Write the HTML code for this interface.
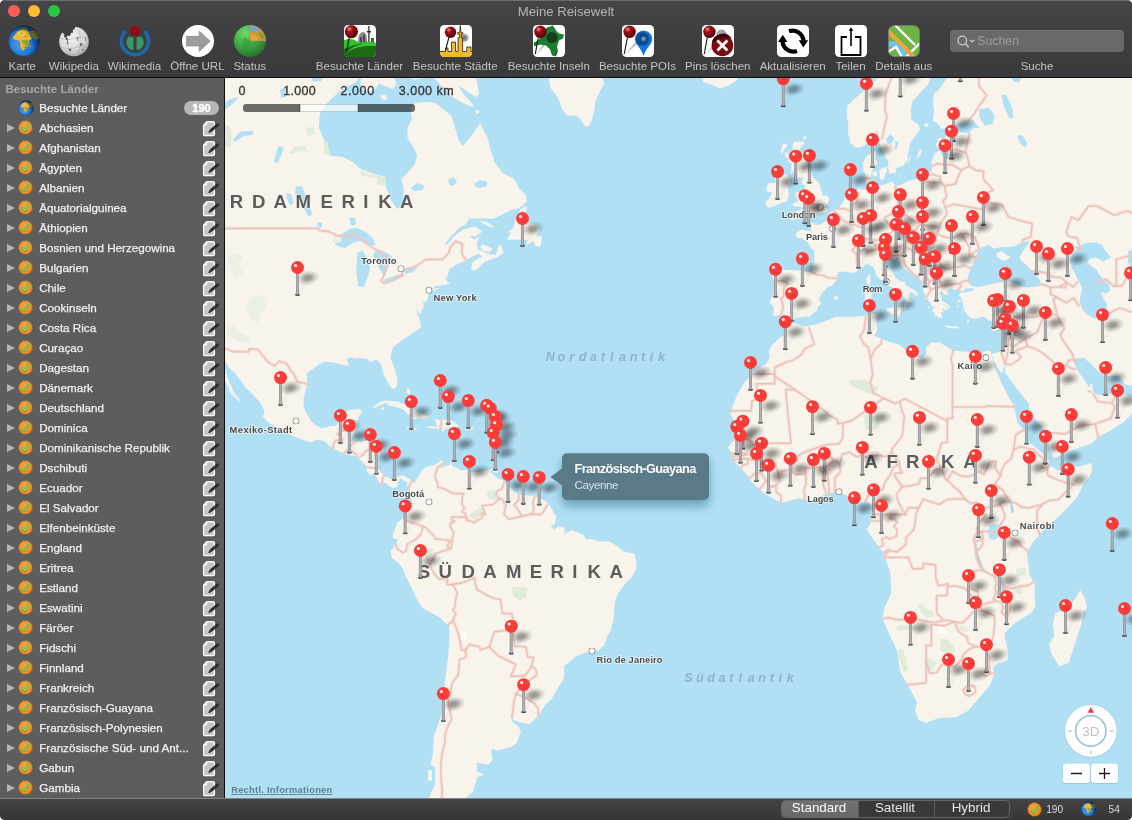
<!DOCTYPE html>
<html lang="de"><head><meta charset="utf-8"><title>Meine Reisewelt</title>
<style>
*{box-sizing:border-box;margin:0;padding:0}
html,body{width:1132px;height:820px;overflow:hidden;background:#fff}
body{font-family:"Liberation Sans","DejaVu Sans",sans-serif;-webkit-font-smoothing:antialiased;position:relative}
#title,.tl,#search span,#sb .hd,.r b,.pill,#seg span,.sn{will-change:opacity;opacity:.999}
#win{position:absolute;left:0;top:0;width:1132px;height:820px;overflow:hidden;background:#3a3a3c;border-radius:5px}
#tb{position:absolute;left:0;top:0;width:1132px;height:78px;background:linear-gradient(#454547,#3f3f41 40%,#3a3a3c);border-top:1px solid #6c6c6f;border-bottom:1px solid #0c0c0c}
#tb .lights i{position:absolute;top:4px;width:12px;height:12px;border-radius:50%}
#title{position:absolute;left:0;width:1132px;top:1.5px;height:18px;line-height:18px;text-align:center;color:#b6b6b6;font-size:13.15px}
.ti{position:absolute;top:24px;width:32px;height:32px}
.ti svg{display:block;width:32px;height:32px}
.tl{position:absolute;top:57.5px;height:14px;line-height:14px;font-size:11.55px;color:#c4c4c4;white-space:nowrap;transform:translateX(-50%)}
#search{position:absolute;left:950px;top:29px;width:174px;height:22px;border-radius:4px;background:#69696b;border-top:1px solid #747477}
#search span{position:absolute;left:27.3px;top:2px;font-size:12.3px;line-height:16px;color:#9c9c9e}
#sb{position:absolute;left:0;top:78px;width:224px;height:720px;background:#5d5d5d}
#div{position:absolute;left:224px;top:78px;width:1px;height:720px;background:#0a0a0a}
#sb .hd{position:absolute;left:5.5px;top:4px;height:14px;line-height:14px;font-size:11.5px;font-weight:bold;color:#a8a8a8}
.r{position:absolute;left:0;width:224px;height:20px}
.r b{position:absolute;left:39.2px;top:2px;height:16px;line-height:16px;font-size:11.65px;font-weight:normal;color:#f2f2f2;white-space:nowrap;-webkit-text-stroke:.25px #f2f2f2}
.r .tri{position:absolute;left:7px;top:6px;width:0;height:0;border-left:8px solid #b4b4b4;border-top:4px solid transparent;border-bottom:4px solid transparent}
.r svg.ic{position:absolute;left:18.4px;top:2.3px;width:15px;height:15px}
.r svg.ed{position:absolute;left:201px;top:1px;width:20px;height:18px}
.pill{position:absolute;left:184px;top:3px;width:35px;height:14px;border-radius:7px;background:#b8b8b8;color:#fff;font-size:11px;font-weight:bold;line-height:15px;text-align:center;-webkit-text-stroke:.35px #fff}
#map{position:absolute;left:225px;top:78px;width:907px;height:720px;overflow:hidden;background:#b1e0f5}
#map svg{position:absolute;left:0;top:0;display:block}
#st{position:absolute;left:0;top:798px;width:1132px;height:22px;background:linear-gradient(#444446,#363638);border-top:1px solid #858385}
#seg{position:absolute;left:781px;top:1px;width:229px;height:17.5px;border-radius:4.5px;border:1px solid #666668;background:#39393b;overflow:hidden}
#seg i{position:absolute;top:0;height:17px;display:block}
#seg span{position:absolute;top:-2px;height:17px;line-height:17px;font-size:13.4px;color:#e6e6e6;text-align:center;margin-left:-1px}
.sn{position:absolute;top:3.5px;font-size:10.1px;line-height:14px;color:#dcdcdc}
#map svg{will-change:transform}.ct{letter-spacing:0}</style></head>
<body><div id="win">
<div id="tb"><div class="lights"><i style="left:8px;background:#fd5f57"></i><i style="left:28px;background:#febc2e"></i><i style="left:48px;background:#28c840"></i></div><div id="title">Meine Reisewelt</div><div class="ti" style="left:8px"><svg viewBox="0 0 32 32" width="32" height="32"><defs><radialGradient id="gk" cx="36%" cy="62%" r="78%"><stop offset="0" stop-color="#45a2ea"/><stop offset=".5" stop-color="#1f73d0"/><stop offset=".85" stop-color="#113f95"/><stop offset="1" stop-color="#0a2258"/></radialGradient><radialGradient id="nk" cx="25%" cy="75%" r="95%"><stop offset=".55" stop-color="#000" stop-opacity="0"/><stop offset="1" stop-color="#000" stop-opacity=".6"/></radialGradient><clipPath id="ck"><circle cx="16" cy="16" r="15.600"/></clipPath></defs><circle cx="16" cy="16" r="15.600" fill="url(#gk)"/><g clip-path="url(#ck)"><path d="M11.500 3.200l5.500-1.400 4 1.200-1.500 1.800-4.500.4z" fill="#4d7a2c"/><path d="M21.500 6.500l4.500-1.500 4 3.500 1.500 5-4 1-3-2.500-1.500-2.500z" fill="#7d8f33"/><path d="M7.500 9l2.500-3 4-1.500 4 .5 2.500 1.500 1 2 1 3 1.500 2.500-2.500 1-1.500 3-1 3-1.500 2-2 2.500-1.500-.5-1.500-3-.5-4-1-2.500-2.500-.5-2.500-.5-1.500-2z" fill="#eeb63a"/><path d="M13 15.500l3-1 4 .5 1.500 2.500-1 3-1.500 2-2 0-1.500-3z" fill="#8cad3a"/><path d="M9 7.500l4-2 4 .3 2.500 1.500-1 2.500-4 1-4-.8z" fill="#f5cd4c"/><path d="M14.500 20l3-.5 1 2-1.500 2.500-1.500-.5z" fill="#eaa231"/><path d="M21.800 19.500l.9.300-.3 3-.9.500z" fill="#d99a32"/><g fill="#e0281e"><circle cx="13.400" cy="8.500" r=".7"/><circle cx="17.600" cy="11.200" r=".7"/><circle cx="11.300" cy="19.200" r=".7"/><circle cx="17.400" cy="22.400" r=".6"/><circle cx="3.300" cy="11.500" r=".6"/><circle cx="23.800" cy="7" r=".6"/><circle cx="26.400" cy="10.500" r=".6"/><circle cx="18.400" cy="17.200" r=".6"/></g><circle cx="16" cy="16" r="15.600" fill="url(#nk)"/></g><circle cx="16" cy="16" r="15.400" fill="none" stroke="#1a1a2a" stroke-opacity=".55" stroke-width=".7"/></svg></div><div class="tl" style="left:22.25px">Karte</div><div class="ti" style="left:58px"><svg viewBox="0 0 32 32"><defs><radialGradient id="gW" cx="42%" cy="38%" r="72%"><stop offset="0" stop-color="#f4f4f4"/><stop offset=".55" stop-color="#d9d9d9"/><stop offset=".9" stop-color="#a2a2a2"/><stop offset="1" stop-color="#7c7c7c"/></radialGradient><clipPath id="cW"><path d="M4.200 7.600L6.500 9.500 6 12.200 8.600 12.600 9.600 10.400 12 11 13 8 15.200 7.600 14.600 5 16.600 4 17.500 1.800A14.800 14.800 0 1 1 4.200 7.600z"/></clipPath></defs><g clip-path="url(#cW)"><rect width="32" height="32" fill="url(#gW)"/><g stroke="#9a9a9a" stroke-width=".5" fill="none" opacity=".8"><path d="M2 13c5 2 9 2 14 .500s9-1.500 14-.500M3 22c5 2 8.500 2 13 1s8-2 12.500-1M10 6c-1.500 8-.500 17 3 26M21 5c2 8 1.500 18-1.500 26"/></g><g fill="#5e5e5e"><path d="M8.200 14.500h2.400v.6h-.8v3h.8v.6h-2.400v-.6h.8v-3h-.8z"/><path d="M18.600 12.200l2.400.4-.1.600-.9-.1-.4 2.800-.7-.1.400-2.800-.8-.1z"/><path d="M22 18.400l2.200-.4.2 3-.7.1-.1-1.200-.9.200.1 1.200-.7.100z"/><path d="M11 23.400l2.200.5-.2 2-2.100-.5z"/><path d="M23.800 24.600l1.400-.6.500 1.200-1.400.6z"/><path d="M27.500 13l.6 2.600-.6.200-.6-2.600z"/><circle cx="8.600" cy="13.600" r=".9" fill="#222"/></g></g></svg></div><div class="tl" style="left:73.9px">Wikipedia</div><div class="ti" style="left:119px"><svg viewBox="0 0 32 32"><circle cx="16" cy="5.6" r="5.2" fill="#8e0d13"/><path d="M6.6 6.2A13.6 13.6 0 1 0 25.4 6.200" fill="none" stroke="#1c6ba6" stroke-width="3.6"/><path d="M14.4 12.2v13.1a8.2 8.2 0 0 1-4.6-13.900zM17.6 12.2v13.1a8.2 8.2 0 0 0 4.6-13.900z" fill="#389a62"/></svg></div><div class="tl" style="left:134.5px">Wikimedia</div><div class="ti" style="left:182px"><svg viewBox="0 0 32 32"><circle cx="16" cy="16" r="16" fill="#fff"/><path d="M4.500 11.300h12.700v-5.300l11 10.200-11 10.200v-5.400h-12.700z" fill="#9d9d9d" stroke="#7d7d7d" stroke-width=".6"/></svg></div><div class="tl" style="left:197.4px">Öffne URL</div><div class="ti" style="left:234px"><svg viewBox="0 0 32 32"><defs><radialGradient id="gS" cx="35%" cy="25%" r="85%"><stop offset="0" stop-color="#6fdc6a"/><stop offset=".5" stop-color="#3ea645"/><stop offset="1" stop-color="#1f6a26"/></radialGradient><clipPath id="cS"><circle cx="16" cy="16" r="16"/></clipPath></defs><circle cx="16" cy="16" r="16" fill="url(#gS)"/><g clip-path="url(#cS)"><path d="M16 0h16v16h-16z" fill="#c7983a"/><path d="M16 1l6 1 4 4-5 1-5-2z" fill="#6da7d2"/><path d="M24 7l6 3 2 5-5-2z" fill="#7e9b3f"/><path d="M17 9l5 1 2 5-7 1z" fill="#e0a832"/><path d="M10 12l8 5-7 8-3-6z" fill="#2f9a3a" opacity=".6"/></g></svg></div><div class="tl" style="left:249.75px">Status</div><div class="ti" style="left:344px"><svg viewBox="0 0 32 32"><defs><clipPath id="cL"><rect width="32" height="32" rx="4.5"/></clipPath></defs><g clip-path="url(#cL)"><rect width="32" height="32" fill="#fff"/><path d="M14 16c0-5 2-9 5-9s4 4 4 9v3h-9z" fill="#8c8c8c"/><path d="M16 12h2v8h-2zM19 10h2v10h-2z" fill="#4b4b4b"/><path d="M24.300 1h1.200v5h1.400v1.600h-1.400v10h-1.200v-10h-1.300v-1.600h1.300z" fill="#222"/><path d="M27 13h3v6h-3z" fill="#555"/><path d="M0 15c6-2 11-1 15 3 6-2 12-2 17 0v14h-32z" fill="#2fc22c"/><path d="M0 24c9-5 20-6 32-4v3c-12-1-22 1-32 7z" fill="#1d6b12"/><path d="M0 27c10-5 21-6 32-5v10h-32z" fill="#1d6b12"/><path d="M2 28c8-6 18-8 30-7v-2c-13-1-23 2-30 9z" fill="#39d634"/></g><path d="M5.800 9.500l-3.300 17" stroke="#111" stroke-width="1.100"/><defs><radialGradient id="pa" cx="35%" cy="30%" r="75%"><stop offset="0" stop-color="#ef8a8a"/><stop offset=".3" stop-color="#a0101a"/><stop offset="1" stop-color="#4e0006"/></radialGradient></defs><circle cx="7.4" cy="6.6" r="6.6" fill="url(#pa)"/></svg></div><div class="tl" style="left:359.5px">Besuchte Länder</div><div class="ti" style="left:440px"><svg viewBox="0 0 32 32"><defs><clipPath id="cT"><rect width="32" height="32" rx="4.500"/></clipPath><radialGradient id="gT"><stop offset="0" stop-color="#555" stop-opacity=".9"/><stop offset=".6" stop-color="#777" stop-opacity=".7"/><stop offset="1" stop-color="#999" stop-opacity="0"/></radialGradient></defs><g clip-path="url(#cT)"><rect width="32" height="32" fill="#fff"/><circle cx="24.300" cy="12.800" r="5.200" fill="url(#gT)"/><path d="M-1 33V26.500H5.500V23H8V26.500H11.500V17H15.500V26.500H18V13H19.300V9H17.800V7.600H19.600L20.300 .5 21 7.600H22.800V9H21.300V13H22.600V26.500H26.800V22H31V26.500H33V33z" fill="#f2b92e" stroke="#2e2206" stroke-width=".8" stroke-linejoin="round"/><path d="M-1 33V28.200H33V33z" fill="#f2b92e"/></g><path d="M9 12.200l-3.600 13.500" stroke="#111" stroke-width="1.100"/><defs><radialGradient id="pb" cx="35%" cy="30%" r="75%"><stop offset="0" stop-color="#ef8a8a"/><stop offset=".3" stop-color="#a0101a"/><stop offset="1" stop-color="#4e0006"/></radialGradient></defs><circle cx="10.5" cy="7.2" r="5.7" fill="url(#pb)"/></svg></div><div class="tl" style="left:455.2px">Besuchte Städte</div><div class="ti" style="left:533px"><svg viewBox="0 0 32 32"><rect width="32" height="32" rx="4.500" fill="#fff"/><path d="M2.500 30l8-11 1.500 1.500z" fill="#bbb"/><path d="M14 2.500l6-2 3 5 3 3 5 1-1 4-4 2-2 6 1 5-2 5-4-1-2-6-4-4-6-1-6 2-0-4 5-3 3-6z" fill="#1f7d33"/><circle cx="19" cy="12.500" r="5.600" fill="#14401f"/><path d="M5.600 10.500l-3.300 18.500" stroke="#111" stroke-width="1.100"/><defs><radialGradient id="pc" cx="35%" cy="30%" r="75%"><stop offset="0" stop-color="#ef8a8a"/><stop offset=".3" stop-color="#a0101a"/><stop offset="1" stop-color="#4e0006"/></radialGradient></defs><circle cx="7.4" cy="6.8" r="6.2" fill="url(#pc)"/></svg></div><div class="tl" style="left:548.75px">Besuchte Inseln</div><div class="ti" style="left:622px"><svg viewBox="0 0 32 32"><rect width="32" height="32" rx="4.500" fill="#fff"/><path d="M2.500 30l11-13 2 2z" fill="#c4c4c4"/><path d="M21.600 5.500a8.600 8.600 0 0 1 8.600 8.600c0 5.600-6.400 9-8.600 17-2.200-8-8.600-11.400-8.600-17a8.600 8.600 0 0 1 8.600-8.600z" fill="#1273de"/><circle cx="20.500" cy="14" r="6.800" fill="#0b4c94"/><circle cx="21.600" cy="13.800" r="2.200" fill="#8a8f96"/><path d="M5.800 10.500l-3.500 18.500" stroke="#111" stroke-width="1.100"/><defs><radialGradient id="pd" cx="35%" cy="30%" r="75%"><stop offset="0" stop-color="#ef8a8a"/><stop offset=".3" stop-color="#a0101a"/><stop offset="1" stop-color="#4e0006"/></radialGradient></defs><circle cx="7.6" cy="6.8" r="6.2" fill="url(#pd)"/></svg></div><div class="tl" style="left:637.45px">Besuchte POIs</div><div class="ti" style="left:702px"><svg viewBox="0 0 32 32"><rect width="32" height="32" rx="4.500" fill="#fff"/><path d="M2.500 30l11-13 2 2z" fill="#c4c4c4"/><circle cx="19.500" cy="9.500" r="5" fill="#666" opacity=".6"/><circle cx="20.400" cy="20.400" r="10.800" fill="#7a0b10"/><path d="M9.800 18a10.800 10.800 0 0 1 20-4c-6-3-14-1-20 4z" fill="#3e0306"/><path d="M15.400 15.400l10 10M25.400 15.400l-10 10" stroke="#fff" stroke-width="2.800"/><path d="M5.600 10.500l-3.300 18.500" stroke="#111" stroke-width="1.100"/><defs><radialGradient id="pe" cx="35%" cy="30%" r="75%"><stop offset="0" stop-color="#ef8a8a"/><stop offset=".3" stop-color="#a0101a"/><stop offset="1" stop-color="#4e0006"/></radialGradient></defs><circle cx="7.4" cy="6.8" r="6.2" fill="url(#pe)"/></svg></div><div class="tl" style="left:717.75px">Pins löschen</div><div class="ti" style="left:777px"><svg viewBox="0 0 32 32"><rect width="32" height="32" rx="4.500" fill="#fff"/><path d="M12 6.200a11 11 0 0 1 14.500 9.500" fill="none" stroke="#000" stroke-width="4.200"/><path d="M21.800 15.200h9.400l-4.900 7.200z" fill="#000"/><path d="M20 26a11 11 0 0 1-14.500-9.500" fill="none" stroke="#000" stroke-width="4.200"/><path d="M1 17h9.400l-4.600-7.200z" fill="#000"/></svg></div><div class="tl" style="left:792.7px">Aktualisieren</div><div class="ti" style="left:835px"><svg viewBox="0 0 32 32"><rect width="32" height="32" rx="4.500" fill="#fff"/><path d="M12 12h-5.500v18h19v-18h-5.500" fill="none" stroke="#000" stroke-width="1.800"/><path d="M16 21v-16" stroke="#000" stroke-width="1.600"/><path d="M13.600 5.800l2.400-3.600 2.400 3.600z" fill="#000"/></svg></div><div class="tl" style="left:850.5px">Teilen</div><div class="ti" style="left:888px"><svg viewBox="0 0 32 32"><defs><clipPath id="cD"><rect x=".5" y=".5" width="31" height="31" rx="6"/></clipPath></defs><g clip-path="url(#cD)"><rect width="32" height="32" fill="#6cb544"/><path d="M0 17c5-2 9-1 12 2l6 5 4 8h-22z" fill="#6cc4ea"/><path d="M0 23c4-2 7-1 10 2l4 7h-14z" fill="#6cb544"/><path d="M5 -2l22 22M18 32l16-16M-2 28l10-6 6 10" stroke="#fff" stroke-width="2.400" fill="none"/><path d="M-3 3l32 32" stroke="#e8a93a" stroke-width="4.200"/></g><rect x=".5" y=".5" width="31" height="31" rx="6" fill="none" stroke="#777" stroke-width=".8"/></svg></div><div class="tl" style="left:903.8px">Details aus</div><div id="search"><svg viewBox="0 0 24 22" width="24" height="22" style="position:absolute;left:3px;top:-1px"><circle cx="9.300" cy="10.500" r="4.300" fill="none" stroke="#d0d0d0" stroke-width="1.200"/><path d="M12.400 13.700l3.400 3.600" stroke="#d0d0d0" stroke-width="1.300"/><path d="M17 9.800l2 2 2-2" fill="none" stroke="#d0d0d0" stroke-width="1.200"/></svg><span>Suchen</span></div><div class="tl" style="left:1037px">Suche</div></div>
<div id="sb"><svg width="0" height="0" style="position:absolute"><symbol id="bdg" viewBox="0 0 16 16"><defs><radialGradient id="bg1" cx="45%" cy="35%" r="70%"><stop offset="0" stop-color="#fba33c"/><stop offset="1" stop-color="#ee8518"/></radialGradient></defs><path d="M8.00 0.30L9.16 1.40L10.63 0.76L11.35 2.20L12.95 2.10L13.13 3.69L14.67 4.15L14.30 5.71L15.58 6.66L14.70 8.00L15.58 9.34L14.30 10.29L14.67 11.85L13.13 12.31L12.95 13.90L11.35 13.80L10.63 15.24L9.16 14.60L8.00 15.70L6.84 14.60L5.37 15.24L4.65 13.80L3.05 13.90L2.87 12.31L1.33 11.85L1.70 10.29L0.42 9.34L1.30 8.00L0.42 6.66L1.70 5.71L1.33 4.15L2.87 3.69L3.05 2.10L4.65 2.20L5.37 0.76L6.84 1.40z" fill="url(#bg1)" stroke="#c96a10" stroke-width=".35"/><path d="M4.700 8.400l2.300 2.900 4.500-7.300" fill="none" stroke="#3f9a35" stroke-width="2.300" stroke-linejoin="round"/><path d="M4.700 8.300l2.300 2.800 4.500-7.200" fill="none" stroke="#7be06a" stroke-width="1.500" stroke-linejoin="round"/></symbol><symbol id="edt" viewBox="0 0 20 18"><path d="M5.700 2.700h6.300q1.400 0 1.400 1.400v11.200q0 1.400-1.400 1.400h-8q-1.400 0-1.400-1.400v-9.200z" fill="#c6c6c6" stroke="#fff" stroke-width="1.300" stroke-linejoin="round"/><path d="M2.700 6.200h3.400v-3.400z" fill="#fff"/><path d="M16.600 4.400l1.500 1.900-7.400 6-2.900 1.300 1.400-2.900z" fill="#303030" stroke="#303030" stroke-width="1" stroke-linejoin="round"/></symbol></svg><div class="hd">Besuchte Länder</div><div class="r" style="top:20px"><div style="position:absolute;left:18px;top:2px;width:16px;height:16px"><svg viewBox="0 0 32 32" width="16" height="16"><defs><radialGradient id="gs" cx="36%" cy="62%" r="78%"><stop offset="0" stop-color="#45a2ea"/><stop offset=".5" stop-color="#1f73d0"/><stop offset=".85" stop-color="#113f95"/><stop offset="1" stop-color="#0a2258"/></radialGradient><radialGradient id="ns" cx="25%" cy="75%" r="95%"><stop offset=".55" stop-color="#000" stop-opacity="0"/><stop offset="1" stop-color="#000" stop-opacity=".6"/></radialGradient><clipPath id="cs"><circle cx="16" cy="16" r="15.600"/></clipPath></defs><circle cx="16" cy="16" r="15.600" fill="url(#gs)"/><g clip-path="url(#cs)"><path d="M11.500 3.200l5.500-1.400 4 1.200-1.500 1.800-4.500.4z" fill="#4d7a2c"/><path d="M21.500 6.500l4.500-1.500 4 3.500 1.500 5-4 1-3-2.500-1.500-2.500z" fill="#7d8f33"/><path d="M7.500 9l2.500-3 4-1.500 4 .5 2.500 1.500 1 2 1 3 1.500 2.500-2.500 1-1.500 3-1 3-1.500 2-2 2.500-1.500-.5-1.500-3-.5-4-1-2.500-2.500-.5-2.500-.5-1.500-2z" fill="#eeb63a"/><path d="M13 15.500l3-1 4 .5 1.500 2.500-1 3-1.500 2-2 0-1.500-3z" fill="#8cad3a"/><path d="M9 7.500l4-2 4 .3 2.500 1.500-1 2.500-4 1-4-.8z" fill="#f5cd4c"/><path d="M14.500 20l3-.5 1 2-1.500 2.500-1.500-.5z" fill="#eaa231"/><path d="M21.800 19.500l.9.300-.3 3-.9.500z" fill="#d99a32"/><g fill="#e0281e"><circle cx="13.400" cy="8.500" r=".7"/><circle cx="17.600" cy="11.200" r=".7"/><circle cx="11.300" cy="19.200" r=".7"/><circle cx="17.400" cy="22.400" r=".6"/><circle cx="3.300" cy="11.500" r=".6"/><circle cx="23.800" cy="7" r=".6"/><circle cx="26.400" cy="10.500" r=".6"/><circle cx="18.400" cy="17.200" r=".6"/></g><circle cx="16" cy="16" r="15.600" fill="url(#ns)"/></g><circle cx="16" cy="16" r="15.400" fill="none" stroke="#1a1a2a" stroke-opacity=".55" stroke-width=".7"/></svg></div><b>Besuchte Länder</b><div class="pill">190</div></div><div class="r" style="top:40px"><i class="tri"></i><svg class="ic"><use href="#bdg"/></svg><b>Abchasien</b><svg class="ed"><use href="#edt"/></svg></div><div class="r" style="top:60px"><i class="tri"></i><svg class="ic"><use href="#bdg"/></svg><b>Afghanistan</b><svg class="ed"><use href="#edt"/></svg></div><div class="r" style="top:80px"><i class="tri"></i><svg class="ic"><use href="#bdg"/></svg><b>Ägypten</b><svg class="ed"><use href="#edt"/></svg></div><div class="r" style="top:100px"><i class="tri"></i><svg class="ic"><use href="#bdg"/></svg><b>Albanien</b><svg class="ed"><use href="#edt"/></svg></div><div class="r" style="top:120px"><i class="tri"></i><svg class="ic"><use href="#bdg"/></svg><b>Äquatorialguinea</b><svg class="ed"><use href="#edt"/></svg></div><div class="r" style="top:140px"><i class="tri"></i><svg class="ic"><use href="#bdg"/></svg><b>Äthiopien</b><svg class="ed"><use href="#edt"/></svg></div><div class="r" style="top:160px"><i class="tri"></i><svg class="ic"><use href="#bdg"/></svg><b>Bosnien und Herzegowina</b><svg class="ed"><use href="#edt"/></svg></div><div class="r" style="top:180px"><i class="tri"></i><svg class="ic"><use href="#bdg"/></svg><b>Bulgarien</b><svg class="ed"><use href="#edt"/></svg></div><div class="r" style="top:200px"><i class="tri"></i><svg class="ic"><use href="#bdg"/></svg><b>Chile</b><svg class="ed"><use href="#edt"/></svg></div><div class="r" style="top:220px"><i class="tri"></i><svg class="ic"><use href="#bdg"/></svg><b>Cookinseln</b><svg class="ed"><use href="#edt"/></svg></div><div class="r" style="top:240px"><i class="tri"></i><svg class="ic"><use href="#bdg"/></svg><b>Costa Rica</b><svg class="ed"><use href="#edt"/></svg></div><div class="r" style="top:260px"><i class="tri"></i><svg class="ic"><use href="#bdg"/></svg><b>Curaçao</b><svg class="ed"><use href="#edt"/></svg></div><div class="r" style="top:280px"><i class="tri"></i><svg class="ic"><use href="#bdg"/></svg><b>Dagestan</b><svg class="ed"><use href="#edt"/></svg></div><div class="r" style="top:300px"><i class="tri"></i><svg class="ic"><use href="#bdg"/></svg><b>Dänemark</b><svg class="ed"><use href="#edt"/></svg></div><div class="r" style="top:320px"><i class="tri"></i><svg class="ic"><use href="#bdg"/></svg><b>Deutschland</b><svg class="ed"><use href="#edt"/></svg></div><div class="r" style="top:340px"><i class="tri"></i><svg class="ic"><use href="#bdg"/></svg><b>Dominica</b><svg class="ed"><use href="#edt"/></svg></div><div class="r" style="top:360px"><i class="tri"></i><svg class="ic"><use href="#bdg"/></svg><b>Dominikanische Republik</b><svg class="ed"><use href="#edt"/></svg></div><div class="r" style="top:380px"><i class="tri"></i><svg class="ic"><use href="#bdg"/></svg><b>Dschibuti</b><svg class="ed"><use href="#edt"/></svg></div><div class="r" style="top:400px"><i class="tri"></i><svg class="ic"><use href="#bdg"/></svg><b>Ecuador</b><svg class="ed"><use href="#edt"/></svg></div><div class="r" style="top:420px"><i class="tri"></i><svg class="ic"><use href="#bdg"/></svg><b>El Salvador</b><svg class="ed"><use href="#edt"/></svg></div><div class="r" style="top:440px"><i class="tri"></i><svg class="ic"><use href="#bdg"/></svg><b>Elfenbeinküste</b><svg class="ed"><use href="#edt"/></svg></div><div class="r" style="top:460px"><i class="tri"></i><svg class="ic"><use href="#bdg"/></svg><b>England</b><svg class="ed"><use href="#edt"/></svg></div><div class="r" style="top:480px"><i class="tri"></i><svg class="ic"><use href="#bdg"/></svg><b>Eritrea</b><svg class="ed"><use href="#edt"/></svg></div><div class="r" style="top:500px"><i class="tri"></i><svg class="ic"><use href="#bdg"/></svg><b>Estland</b><svg class="ed"><use href="#edt"/></svg></div><div class="r" style="top:520px"><i class="tri"></i><svg class="ic"><use href="#bdg"/></svg><b>Eswatini</b><svg class="ed"><use href="#edt"/></svg></div><div class="r" style="top:540px"><i class="tri"></i><svg class="ic"><use href="#bdg"/></svg><b>Färöer</b><svg class="ed"><use href="#edt"/></svg></div><div class="r" style="top:560px"><i class="tri"></i><svg class="ic"><use href="#bdg"/></svg><b>Fidschi</b><svg class="ed"><use href="#edt"/></svg></div><div class="r" style="top:580px"><i class="tri"></i><svg class="ic"><use href="#bdg"/></svg><b>Finnland</b><svg class="ed"><use href="#edt"/></svg></div><div class="r" style="top:600px"><i class="tri"></i><svg class="ic"><use href="#bdg"/></svg><b>Frankreich</b><svg class="ed"><use href="#edt"/></svg></div><div class="r" style="top:620px"><i class="tri"></i><svg class="ic"><use href="#bdg"/></svg><b>Französisch-Guayana</b><svg class="ed"><use href="#edt"/></svg></div><div class="r" style="top:640px"><i class="tri"></i><svg class="ic"><use href="#bdg"/></svg><b>Französisch-Polynesien</b><svg class="ed"><use href="#edt"/></svg></div><div class="r" style="top:660px"><i class="tri"></i><svg class="ic"><use href="#bdg"/></svg><b>Französische Süd- und Ant...</b><svg class="ed"><use href="#edt"/></svg></div><div class="r" style="top:680px"><i class="tri"></i><svg class="ic"><use href="#bdg"/></svg><b>Gabun</b><svg class="ed"><use href="#edt"/></svg></div><div class="r" style="top:700px"><i class="tri"></i><svg class="ic"><use href="#bdg"/></svg><b>Gambia</b><svg class="ed"><use href="#edt"/></svg></div></div><div id="div"></div>
<div id="map"><svg viewBox="225 78 907 720" width="907" height="720">
<defs><radialGradient id="sh"><stop offset="0" stop-color="#000" stop-opacity=".4"/><stop offset=".3" stop-color="#000" stop-opacity=".34"/><stop offset=".62" stop-color="#000" stop-opacity=".15"/><stop offset="1" stop-color="#000" stop-opacity="0"/></radialGradient><linearGradient id="stk" x1="0" x2="1" y1="0" y2="0"><stop offset="0" stop-color="#8d8d92"/><stop offset=".5" stop-color="#b4b4b8"/><stop offset="1" stop-color="#8d8d92"/></linearGradient><g id="pin"><ellipse cx="10.3" cy="10.300" rx="11.800" ry="7.500" fill="url(#sh)" transform="rotate(-10 10.3 10.300)"/><path d="M2 25l6.500-11.500" stroke="#000" stroke-opacity=".025" stroke-width="4" stroke-linecap="round"/><ellipse cx="0" cy="27.200" rx="2.500" ry="1.200" fill="#4c4c4e"/><rect x="-1.500" y="5" width="3" height="22" fill="url(#stk)"/><circle r="6.500" fill="#fb3d39"/><circle cx="-2" cy="-2.100" r="1.500" fill="#fff"/></g></defs>
<rect x="225" y="78" width="907" height="720" fill="#b1e0f5"/>
<g fill="#f8f4ec">
<polygon points="222.5,75.5 361.2,75.5 355.5,82.2 341,90.2 333.8,96.5 327,103 321.5,110 319.5,115.5 318.8,128 323.8,139.2 327.5,151.8 331.2,156 342.5,156.8 352.5,161.8 361.2,169.2 375,174.2 385,176.8 386.2,188 391.2,200.5 397.5,209.2 403,203 403.8,188 401.2,179.2 407.5,173 415,164.2 417,154.2 412.5,145.5 407.5,138 407.5,128 412,119.2 410.5,108 415,103 427.5,101.8 435,103 445,110.5 451.2,115.5 455,128 458.8,140.5 462.5,146 468.8,139.2 475,130.5 478.8,125.5 480.1,123.2 487.5,137.9 489.6,146 494.4,162.2 502.3,172.6 507.6,175.8 513.9,178.6 519.2,188.5 525.6,194.7 526.9,201.1 522.4,206 518.7,208.3 510.2,210.2 493.8,218.7 484.3,218.2 469.5,218.6 465.3,225.1 460.3,226.7 452.1,235.1 444.2,245.3 447.9,244.1 452.9,237.5 458.4,232.8 463.7,229.6 474.3,226.3 481.4,230.4 481.2,232.4 475.4,236.3 469.5,235.9 473.5,239.5 479.6,236.7 476.9,243.4 478,249.5 479.6,249.9 483.3,251.1 489.1,254.3 496,254.9 498.1,247.2 501.2,243.9 502.3,250.7 503.6,252.6 498.1,256.9 484.5,262 479.6,266.8 473.8,271.2 471.1,268 472.7,262.3 478,258.6 482.2,256.7 478.5,253.7 471.4,257.3 466.4,260.1 456.9,264.6 449.2,269.3 447.3,276.6 445.2,278.7 447.1,281.6 447.6,282.8 450.5,282.6 449.5,280.9 450.8,283.6 447.3,284.4 443.7,285.1 435.2,286.4 431,289 436.8,288.6 440.7,287.8 434.7,290.4 429.4,291.1 429.4,292.1 427.3,299.7 424.6,302.4 421.5,298.7 423.6,303.4 423.7,306.5 419,314.8 416.7,305.5 417.2,315.5 419,316.5 421.3,326.9 415.9,331.1 408.5,335.9 398.2,342.9 392.9,347.6 390.3,357.8 394.8,369.3 397.5,379.7 397,385.2 395.6,388.5 391.9,388.8 388.2,383.3 387.1,381.2 383.1,373.2 381.6,365.1 376.5,359.5 369.4,361.9 367.6,359.3 359.6,357.8 355.4,358.4 350.7,357.5 347,358.7 348.8,366 342.2,364.8 334.3,362.6 324.5,361.7 319.5,364.2 306.8,373.2 307.1,384.1 304.2,395.5 303.4,405.6 306.3,412.9 312.4,422.8 321.6,428.6 330.8,426.1 335.3,425.9 341.9,419.1 342.7,413.5 346.7,411 354.6,409.3 360.4,409.3 362,411.8 358.3,417.2 356.5,427.8 354.4,432.3 351.2,440 352.2,442 355.7,441.4 361.7,441.7 366,441 371.3,440.5 376.5,442.7 381,446 379.8,451.3 377.9,462.3 378.1,468.1 381.7,473.1 385.8,476.6 392.4,479.5 398.2,476.5 399.5,475.5 403.5,475.5 411.4,480.2 413.5,483.8 408.8,488.1 407.5,486.5 407.2,482.2 400.3,478.6 397.7,482.2 397.7,486.7 392.9,488.1 388.7,485.4 386.1,482.7 382.4,483.6 378.7,481.4 375.8,476.3 372.3,473.4 370.7,475.4 366.8,471.2 366.7,466.4 359.6,459.6 357,455.8 352.8,455.8 345.9,453.9 340.6,451.9 332.7,448.5 324.2,441.1 317.4,439.6 310.5,442.5 292.5,435.9 283.8,431.5 280.4,429.8 269.3,423.6 261.9,416.1 264.3,414.6 264,409.5 258.2,400.1 250.3,392 244.2,386.2 240.2,379.7 234.4,372.5 227.5,366 223.3,356.8 218,350.7 207.5,341.3"/>
<polygon points="360.7,57.4 360.7,87.2 368.6,92.5 373.9,90.7 379.2,83.6 384.5,86 392.4,89 396.6,84.8 394.5,77.5 394.5,57.4"/>
<polygon points="380.8,94.8 385.5,94.8 387.6,98.9 383.9,100 380.8,97.7"/>
<polygon points="405.6,57.4 408.2,75.1 413.5,79.4 418.8,78.8 426.7,76.3 429.4,57.4"/>
<polygon points="432,57.4 434.7,78.8 442.6,87.2 451,96 463.7,103.4 471.7,106.8 474.3,106.2 470.1,101.2 463.7,94.2 458.4,85.4 466.4,90.7 475.4,97.1 479.1,94.2 478,87.2 475.4,75.1 475.4,57.4"/>
<polygon points="475.9,110.2 479.1,110.2 479.1,113.5 475.9,113.5"/>
<polygon points="548,75.5 550.5,88 558,98 561.8,108 566.8,115.5 575.5,115.5 580.5,119.2 584.2,125.5 588,126.8 591.8,120.5 594.2,110.5 595.5,100.5 599.2,93 604.2,83 601.8,75.5"/>
<polygon points="704.2,75.5 702.5,81.8 710.5,84.2 720.5,88.5 729.2,85.5 736.8,80 739.2,75.5"/>
<polygon points="527.1,206.8 524.5,214.4 527.1,220.2 529.8,224.3 531.1,223.1 537.7,226.3 539.8,230.8 535.6,237.1 541.4,235.5 541.9,239.7 540,246.9 535.1,245.7 534,241 525.6,245.3 527.7,240.3 516.6,239.5 507.9,239.7 507.1,239.3 510.8,232.4 507.1,232.4 512.9,228.4 514.2,223.9 517.4,214.4 520.8,209.4 525,206.6"/>
<polygon points="479.6,221 487.5,222.3 494.4,227.5 490.1,227.1 482.2,223.1"/>
<polygon points="480.1,246.9 482.8,244.5 492.8,248.4 490.1,251.8 483.3,250.7"/>
<polygon points="781.5,173.2 787.6,174.9 790.3,180 791.6,182.2 788.2,185.9 788.2,191.7 788.7,195.2 786.7,202 783.4,202.1 777.1,205.1 768.6,208.1 766,205.1 765.2,202.6 769.1,198.7 770.7,194.7 772.6,192.5 766.5,191.2 767,185.9 768.6,183.1 775,183.1 776.5,180 774.4,180.4 776.8,175.4"/>
<polygon points="790.3,219.6 792.9,220.5 798.5,217.3 801.1,218.4 802.4,215.3 807.5,215.9 813.5,215.3 819.6,213.4 825.5,212.6 827.5,210.8 828.1,208.7 824.1,207.7 825.7,205.1 827.5,203.8 829.6,199.3 827.3,195.4 822,195.6 822.2,193 820.9,189.4 819.9,185 817.2,181.3 813,176.8 809.8,169.6 807.2,167.4 803.5,167.7 806.7,164.8 805.1,163.1 809.3,156.4 811,153 809.8,151 798.2,153 799.3,149.5 804,143.5 804.4,141.6 794,141.8 792.4,146 793.2,149 789.8,152 790.3,155.1 789.6,157.9 787.6,160.6 791.5,163.5 790.8,174 794.5,170.2 795.6,167.9 794.5,174.9 794.8,180.1 793.5,178.1 801.4,177.7 804.5,177.2 801.4,181.3 803.5,185 805.3,185 804.3,187.6 804.3,190.8 803,191.7 796.1,192.1 795.3,196.5 798.8,200 792.4,204.3 793.5,206.4 799.5,206.8 803.8,208.1 806.1,207.3 804.5,209.1 798.2,210.2 796.5,211.7 794.2,215.7"/>
<polygon points="787.1,152 788.7,156.9 786.1,157.9 784.5,153"/>
<polygon points="783.4,143 787.6,145 783.9,150 781.8,154.9 780.8,151"/>
<polygon points="803,136.9 806.1,135.8 805.6,139.4 803,138.9"/>
<polygon points="881.2,57.4 878.5,76.3 873.2,83.6 870.6,87.2 865.3,89.6 861.1,93.1 853.2,100 847.3,105.7 846.8,116.8 848.4,123.2 847.9,133.8 850,138.4 850,143 855.3,147 857.7,148 862.7,146.5 866.9,143.5 871.7,137.9 875.9,134.8 876.9,128.5 878,135.8 879.6,138.9 880.1,145 883.3,151 886.4,158.8 888.6,161.2 887.5,167 889.1,171.2 888.6,173.2 895.4,173.1 896.2,171.7 895.4,168.4 902.8,166 907.1,161.2 908.6,150.5 910.8,142 916,134.8 920.3,129.6 918.2,124.3 911.3,120 910.8,109 912.3,101.2 915.5,98.3 920.8,91.9 927.7,84.8 931.4,76.3 931.4,57.4"/>
<polygon points="879.1,170.2 883.3,167.4 887,167 887,171.2 884.9,174.9 883.8,179.5 880.1,179.5 879.6,174.9"/>
<polygon points="872.2,172.1 876.4,171.2 877.5,174 876.9,176.3 873.2,176.3"/>
<polygon points="916.6,157.9 918.2,153 920.8,148.5 921.9,151 919.7,155.9 917.1,158.8"/>
<polygon points="907.1,165.5 908.6,158.8 910.8,154.4 909.7,159.8"/>
<polygon points="898.1,175.8 900.5,174.9 900.2,176.8"/>
<polygon points="935.6,143 939.3,141.5 943,142.5 941.9,145 937.7,148 936.1,146"/>
<polygon points="937.2,138.9 940.3,137.4 941.9,139.4 938.8,141"/>
<polygon points="924,124.3 927.7,123.2 927.7,127 925,127"/>
<polygon points="948.8,57.4 948.8,76.3 942.5,84.2 938.2,90.7 934,93.1 932.9,102.3 934,111.3 933.5,115.7 932.9,121.1 937.2,123.2 941.9,129.1 952.2,125.9 962.8,122.7 972.1,120 977.9,125.9 980,128 973.6,128 968.4,133.3 960.4,132.2 951.2,133.3 947.2,134.3 944.6,137.9 945.1,142 949.9,144.5 949.1,149 947.7,157.9 943,157.4 939.8,150.5 934.3,153.9 931.4,162.7 931.9,170.2 926.1,177.2 924,181.8 918.9,182.2 917.6,178.6 907.6,181.3 902.6,184.1 895.7,186.6 892.3,181.3 884.3,184.5 878,186.3 874,182.2 870.3,178.6 871.7,172.1 874.3,166 878,163.1 874.8,157.9 876.1,153.5 876.4,150.5 873,152 865.8,156.9 863.2,162.7 863.2,171.7 865,172.6 866.1,177.7 865.8,183.1 867.4,186.8 865.3,189.9 858.4,188.5 856.9,190.8 846.8,192.1 845.5,195.2 842.9,202.6 838.9,208.1 835.7,209.8 830.2,212.3 828.9,214.4 828.3,218.6 826.2,220.8 820.9,224.3 815.1,225.1 813.8,222.7 811.7,223.1 810.4,222.7 811.9,231.2 809.8,231.2 801.9,229.6 795.3,233.2 797.2,237.9 802.4,238.3 807.2,241.8 809.8,246.5 814.3,250.7 814.6,254.9 814.1,262 812.2,270.4 809.8,271.9 804.5,271.2 800.3,270.6 790.5,270.1 783.4,269.7 778.1,268.6 776,271.4 771.4,274.8 773.9,279.8 774.7,287.2 773.4,293.8 770.7,299.3 770.2,303.6 773.4,305.5 773.9,309.2 772.8,315.4 778.7,315.5 783.7,314.2 787.1,318.8 790.8,322.1 792.1,321.1 797.2,317.5 807.5,316.6 808.8,317.3 815.1,311.5 816.7,311.5 817.8,306.5 821.5,303.8 818.6,299 823,291.8 824.9,290.4 827,287.6 832,285.5 837.8,279.1 836.5,276.2 838.9,271.9 845.8,271.5 848.7,271.9 851.8,273.3 855.5,272.6 858.7,269 862.7,267.7 865.3,264.6 867.4,263.8 872.2,266 874.8,270.1 875.9,274.8 879.1,278.4 882.8,280.5 885.1,283 887,285.1 892,286.9 895.7,289.5 898.3,290.7 901.2,295.2 902.8,294.9 905.1,299.7 905.5,302.1 904.2,304.1 903.1,308.2 905.2,309.3 908.1,303.4 911,301.4 908.1,295.2 911.3,292.1 915.5,294.9 917.4,296.6 918.2,294.2 915.2,290.7 909.5,287.4 904.4,284.1 906,281.9 900.7,281.6 895.4,278 891.7,269.7 886.8,266.3 885.4,263.5 886.4,259.7 885.7,256.1 889.6,254.5 893.2,254.5 892,255.6 893.6,260.3 896.8,256.9 899.1,259.4 900.9,265.9 904.4,268.8 907.3,270.4 912.3,273.7 916,276.6 919.5,278.4 921.3,280.5 923.2,286 923.3,292.1 926.1,296.1 927.4,298.7 930,302.4 931.9,306.6 935.2,307.1 931.9,309.8 932.9,311.2 934.8,313.8 935.1,316.7 937.2,315.4 939.2,319.4 939.7,317.1 943,319.1 942.2,317.5 940.9,311.7 944,312.8 941.7,309.3 945.3,309.2 947.4,311.2 947.2,307.8 943.5,304.8 941.7,299.7 941.4,295.9 939.8,293.2 941.7,290.9 943.5,293.5 944,295.6 945.9,293.8 947.2,295.6 948.8,294.2 949.3,294.2 946.7,292.5 949.3,288.8 957.3,289.3 962,291.1 958.8,294.9 961.5,292.8 965.7,288.6 968.4,288.3 973.4,288.3 974.2,290 967.3,292.1 961.5,292.8 958.6,295.6 960.3,296.4 962.9,302.6 963.8,309.6 967.4,314.9 972.7,318.8 978.3,318.1 982.6,316.4 985.1,317.6 988.6,320.2 993.7,322 998.3,320.2 1003.3,316.9 1008,317.1 1011.8,318.1 1011.6,322 1009.6,325.4 1008,335.5 1004.3,346.4 1004.3,346.3 1002.7,350.1 997.4,352.7 992.1,353.6 993,360.3 996,365.1 999.2,370.4 1001.8,373.4 1003.1,370.4 1004.1,364.2 1005,367.7 1004.9,372.2 1008.4,376.9 1013.3,383.7 1018.6,390.7 1024,397.8 1028.4,403.1 1029.6,410.2 1032.8,416.4 1038.1,422.6 1042.5,428.8 1046.6,434.9 1048.7,443.8 1050.5,450.9 1052.6,456.5 1055.8,457.6 1066.4,452.3 1078.8,447.7 1091.2,443.8 1098.2,437.1 1108.8,431.4 1123,422.6 1132,413.7 1137.1,401.3 1129,396.7 1120,391.8 1118.2,387.6 1117.9,381.4 1115.9,387.2 1115.9,390.7 1108.8,394.3 1101.8,395.2 1094.7,394.3 1092.9,391.6 1092.6,384.5 1090.3,384 1089.7,388.1 1085.8,381.9 1080.5,374.8 1076.1,367.7 1073.5,361.6 1074.4,359.3 1077,358 1084.1,358 1089.4,362.4 1094.7,367.7 1100,373.1 1107.1,376.2 1114.1,376.2 1117.9,375.5 1122.1,380.1 1125.8,385.1 1138.9,385.8 1140,60"/>
<polygon points="789.8,323.4 792.4,322.7 805.1,326.6 817.2,324 836.5,316.8 847.3,317.1 861.6,316.2 872.6,313.7 878.5,315 876.4,319.4 876.4,323.4 877.5,330.5 873.8,335.6 879.1,338.1 890.1,341.9 900.2,345.1 908.1,352.5 921.9,358.1 926.1,354.4 926.4,346.9 931.4,342.6 939.8,342.6 947.2,346.9 953.6,350.7 964.1,351.6 978.4,352.5 988.4,350.7 991.1,352.1 992.4,360.2 995.3,369.9 999,376.5 1001.6,383.3 1004.8,389.3 1008,396.1 1013.8,405.8 1017,420.6 1017.8,423.4 1023.8,429.5 1028.9,442.7 1036.5,447.7 1046,456.9 1049.2,459.6 1048.4,464.5 1050.3,465.8 1058.2,470.7 1068.7,467.2 1080.4,466.2 1091.5,463.1 1092,470.9 1088.8,478.4 1083.5,483.8 1076.7,497.9 1060,515.4 1045.2,528 1036.5,538.2 1032.3,543.1 1030,547.6 1027,553 1028.1,562.2 1029.1,573.7 1032.8,580.8 1034.9,583.1 1034.4,595.5 1035.5,603.6 1035.5,606.4 1031.2,613 1015.4,622.4 1004.5,633.3 1005.3,639.7 1006.9,645.4 1008,656.1 1006.9,660.4 997.9,663.3 992.7,668.3 994.2,674.5 990,685.2 984.4,691.7 967.8,711.1 955.7,717.2 939.3,718.1 926.1,722.8 918,719.7 917.6,716.8 915,711.1 917.1,702.3 909.5,687.9 907.3,684.2 900.5,672.4 897,650.8 891.2,638 882.5,618.8 884.6,607.5 891.2,593.2 890.3,573.1 885.7,558.7 883,551.5 878.5,546.8 876.7,544.3 866.6,529.6 870.3,524.1 872,516.4 872.7,510.7 871.7,504.8 867.4,502.4 864.3,502.1 852.6,503.5 846.8,495.5 838.4,492 833.2,492.6 826.8,493.7 819.3,496.8 809.3,501.1 799.3,498.2 780.8,502.9 763.3,492.8 750.7,481.1 748,475.8 735.9,462.9 732.7,454.5 727.9,447.7 733.2,440.5 735.9,428.9 734.3,421.7 730.3,413.2 736.1,397.2 743.8,383.3 749.6,377 752.2,372.3 766.5,363.5 769.7,357.5 768.8,350.7 771.5,345.7 780.2,337.5 784.2,335 787.9,327.3"/>
<polygon points="1080.6,589.8 1080.9,591.7 1084.6,597.4 1087.2,608 1083.5,611.3 1083,615.2 1081.4,623.8 1075.9,640.9 1073,650 1068.7,662.9 1059,666.2 1051,653.1 1049.5,644 1054.3,635.8 1052.9,623.2 1055.3,613 1065,610.2 1070.3,605.8 1075.6,597.7 1078.5,592.8"/>
<polygon points="411.7,480.2 414.1,483.8 417.2,479 421.5,470.9 425.2,467.7 428.3,466.4 435.2,464.8 441.7,459.9 443.7,463.4 440.5,467.2 442.1,468 445.2,466.1 449.5,465 450.5,461.2 452.1,465.6 461.1,470.4 466.9,469.9 472.2,472 478.5,472.3 481.2,470.7 493.3,469.3 490.1,472 498.1,478.4 503.4,481.1 513.1,490.2 519.2,495 528.7,495.2 535.6,496 544,500.1 548.3,502.9 556.2,516.7 554.6,524.6 550.7,526 554.1,529.4 558.8,526.2 564.7,527.8 564.1,533.9 572.1,529.9 583.7,535.2 586.3,539.4 591.1,538.9 599.5,541.5 609,541.3 617,545.9 623.8,551.6 634.4,553.7 636.5,563.8 636,568.9 631.8,577.4 624.6,584.1 617,595.3 614.3,605.3 614,614.3 613,621.3 610.6,631.3 607.5,635.8 603.8,645.4 598.5,650.6 592.1,650.6 584.2,652.9 575.8,656.6 566.8,663.9 564.1,665.6 564.1,678 557.8,688.2 552,698.6 545.1,705.1 538.2,715.5 530,723.7 523.4,723.2 514.7,720.4 511.8,717.4 511.8,721.3 514.5,723.2 518.7,726.4 520.8,732.3 516.3,743.6 510.2,747.3 498.1,750.3 491.2,749 492.3,760.6 488.6,764.8 476.9,762.7 476.9,771.2 484.3,774.7 476.9,776.9 476.4,780.5 473.2,791.5 463.7,799.6 463.7,812.1 420.9,812.1 420.9,806.7 429.4,796.8 434.7,785.6 435.2,774.7 434.9,767.4 430.4,764.1 432.6,755.8 434.1,735.6 437.8,725.8 442.1,711.4 443.7,691.9 445.8,675.1 448.4,654.9 449.7,635.2 448.9,625.7 443.4,621 440,617.4 423,608.6 417.2,599.8 412.7,590.3 405.1,574.5 403,569.1 397.9,562.2 391.9,558 390.7,551 395.3,544.7 398.2,539.9 392.4,537.8 394,531.2 395,528.2 397.7,522 399.5,521 404,516.7 413,505.6 410.6,497.1 411.4,493.4 408.8,488.1"/>
<polygon points="428.3,769.8 432,770.5 432,780.5 427.8,780.5"/>
<polygon points="371.5,407.7 380.8,401.6 385,400.4 389.8,400.7 397.7,401.6 405.6,404.7 412.5,408.7 418.3,411.8 428.6,416.9 423,418.9 419.9,418.5 409.7,419.1 413,416.3 408.2,414.4 403.5,409.5 395.3,406.7 389.8,405.8 385.5,403 379.2,405.8 375,407.8"/>
<polygon points="381.3,407.6 383.9,407.6 383.9,410.1 381.3,409.8"/>
<polygon points="406.4,427.5 408.8,426.7 414.1,427.3 417.8,429.2 414.6,430 409.8,430.3"/>
<polygon points="427,427.5 428.9,425.9 435.7,427 438.1,426.4 435.7,423.9 436.3,421.4 432.6,419.4 438.9,419.7 446.8,419.4 451,420.3 454.2,422.2 456.3,423.9 459.2,426.1 456.1,427.3 451,427 447.3,428.4 444.7,428.4 443.1,431.7 441,429.2 437.3,428.4 430.7,428.4"/>
<polygon points="465.3,427.3 473.5,427.3 472.7,429.5 465.3,429.8"/>
<polygon points="493.3,469.3 498.6,468.8 498.1,472.6 493.3,472.8"/>
<polygon points="406.7,388.5 409.8,389.1 410.4,394.3 407.2,393.8"/>
<polygon points="218,350.7 223.3,359.9 226.5,374.4 230.2,383.8 234.4,393.8 239.7,399.5 239.4,401.8 237,399.5 230.2,392.6 227,383.8 218,374.4 212.7,362.9"/>
<polygon points="941.7,303.1 944,302.1 948.3,304.8 950.4,307.8 950.1,309.2 947.2,306.5 944.6,305.1"/>
<polygon points="957,300.7 959.9,299.7 961,301.7 958.3,302.4"/>
<polygon points="957.3,305.1 958.6,305.1 958.3,307.5 957.3,307.1"/>
<polygon points="966.8,321.1 969.4,319.1 968.9,322.1 967.3,322.7"/>
<polygon points="928.2,306.5 930,306.8 929.8,308.5 928.2,307.8"/>
<polygon points="924.2,296.9 925.8,296.9 926.6,299.3 925.3,299"/>
<polygon points="863.7,288.3 869,286.5 871.9,291.8 871.1,300.7 868,302.1 864.8,301.4 865,295.2"/>
<polygon points="870.1,274.1 870.9,280.5 869.3,285.5 866.9,283.7 866.1,278.4 868.5,275.9"/>
<polygon points="886.2,308.8 890.7,307.5 902.6,307.1 900.2,313.5 900.2,317.5 896,315.5 887,311.5"/>
<polygon points="945.1,325.3 948.8,326.1 956.7,326.6 959.4,327.3 958.3,328.2 951.4,328.6 945.1,326.7"/>
<polygon points="991.1,328.2 994.5,326.3 1003,324.3 999.8,328.6 994.8,331.1 991.9,330.2"/>
<polygon points="833.1,298 836.8,295.6 838.6,298 836.3,300"/>
</g>
<g fill="#b1e0f5">
<polygon points="223.8,103 232.5,98 238.8,97.5 235,101.8 228.8,106.8 223.8,110.5"/>
<polygon points="280,89.2 287.5,88 286.2,96.8 281.2,98"/>
<polygon points="311.2,76.8 322.5,76.8 321.2,81.8 312.5,81"/>
<polygon points="232.5,140.5 240,131.8 252.5,130.5 253.8,134.2 242.5,136.8 235,141.8"/>
<polygon points="278.8,145.5 283.8,148 281.2,155.5 277.5,163 273.8,161.8 276.2,153"/>
<polygon points="296.2,186 302.5,186.8 305,195.5 310,208 312.5,214.2 308.8,216.8 305,210.5 300,200.5 295,193"/>
<polygon points="286.2,193 291.2,194.2 293.8,203 290,205.5 287.5,200.5"/>
<polygon points="349.2,218 355,217.5 356.2,224.2 351.2,226"/>
<polygon points="317.5,221.8 322.5,223 321.2,228 317.5,226.8"/>
<polygon points="332.5,240.5 342.5,233.5 350,228.5 357.5,228 365,231.8 372.5,238 375.5,245 367.5,245.5 360,241 352.5,243 345,248 337.5,246"/>
<polygon points="357.5,253 362.5,250.5 367.5,258 370,268 367.5,278 363.8,286.8 358,286.8 356.2,270.5"/>
<polygon points="375,250.5 381.2,250.5 387.5,253 392,256.8 390,261.8 387.5,270.5 383.8,275.5 379.5,269.2 377.5,261.8 373,256"/>
<polygon points="383,280 395,276 402.5,272.5 404,276 395,281 387.5,283.5"/>
<polygon points="403.8,270.5 412.5,267 417.5,268 413,272 405.5,274"/>
<polygon points="448.2,179.2 453.8,177.5 457,181.8 453,186 448.8,184.2"/>
<polygon points="410.5,188 417.5,183 425,186 422.5,190 413.8,191"/>
<polygon points="473.8,184.2 480,180 487.5,181.8 486.2,186.8 477.5,188"/>
<polygon points="885.9,138.9 890.1,134.3 894.4,137.9 892.3,143 888.6,144 886.4,142"/>
<polygon points="895.4,141 898.6,142 896.5,150 894.9,150"/>
<polygon points="967.4,277.8 970,270.7 973.6,261.9 977.1,253.1 981.5,247.7 988.6,245.1 993,248.6 997.4,247.7 1002.7,246.9 1008,246.9 1015.1,246 1020.4,243.3 1028.4,241 1029.3,243.3 1024,249.5 1019.5,256.9 1021.3,260.5 1025.7,264.5 1031,269.8 1034.6,273.4 1038.1,277.8 1040.8,282.2 1039.9,285.8 1034.6,286.6 1027.5,287.5 1020.4,286.6 1015.1,284 1009.8,281.3 1002.7,282.2 995.7,283.1 988.6,284.9 981.5,286.6 976.2,287 971.8,285.8 968.3,283.1"/>
<polygon points="1071.7,254.8 1077,248.6 1082.3,244.2 1089.4,242.4 1096.5,242.4 1101.8,245.1 1105.3,250.4 1108.8,254.8 1111.5,257.5 1107.1,259.2 1102.6,261.9 1100,259.2 1094.7,257.5 1089.4,259.2 1087.6,262.8 1091.2,266.3 1096.5,269.8 1099.1,274.3 1102.6,278.7 1108.8,284.5 1110.6,290.2 1106.2,293.4 1100.9,292 1103.5,299 1107.1,304.3 1106.2,311.4 1101.8,316.7 1094.7,318.5 1087.6,314.9 1082.3,309.6 1079.7,302.6 1080.5,295.5 1082.3,288.4 1078.8,281.3 1075.2,274.3 1071.7,267.2 1069.9,260.1"/>
<polygon points="1128.3,251.3 1132,249.5 1133.6,258.4 1132,267.2 1128.6,263.7 1127.4,256.6"/>
<polygon points="979,109.2 988.5,107.5 994.8,115.5 992.2,124.2 984.8,125.5 979.8,118"/>
<polygon points="1001.5,94.2 1006.5,95.5 1012.2,108 1013.5,118 1009,118 1003.5,105.5"/>
<polygon points="1017.2,136 1022.2,135 1027.2,143.5 1024.8,147.5 1019.8,143"/>
<polygon points="1011,76.8 1021,76.8 1019.8,82.5 1013.5,81.8"/>
<polygon points="987.9,531 989.5,525.1 996.4,524.1 1001.1,526.2 1000.6,531.5 997.4,538.4 993.7,539.9 989,538.4"/>
</g>
<g fill="#f8f4ec">
<polygon points="996.5,253.1 1001.8,251.3 1006.3,254.8 1010.7,256.6 1008,259.2 1002.7,261 999.2,258.4 996.5,256.6"/>
</g>
<g fill="#e1ebd9">
<polygon points="225,125.5 230,126.8 232,138 230,146.8 225,146.8"/>
<polygon points="289.5,153 293.8,146.8 305,146 308,151.8 300,150.5 292.5,154.2"/>
<polygon points="305.5,128 313.8,126.8 315,134.2 307.5,136"/>
<polygon points="324.5,140.5 327.5,141.8 330,155.5 323.8,154.2"/>
<polygon points="360,170 368.8,174.2 377.5,175.5 385,178 385,185.5 377.5,184.2 377,178 367.5,176.8 361.2,175.5"/>
<polygon points="486.2,491.8 496.2,490.5 497.5,499.2 488.8,500.5"/>
<polygon points="468.8,515.5 482.5,505.5 485,511.8 475,520.5"/>
<polygon points="423.8,550.5 432.5,548 433.8,555.5 425,557.5"/>
<polygon points="511.8,586.8 528,587.5 525.5,598 519.2,600.5 513,595.5"/>
<polygon points="848.5,380.5 866,379.2 878.5,388 873.5,395.5 861,390.5 851,385.5"/>
<polygon points="863.5,415.5 878.5,414.2 879.8,428 866,430.5"/>
<polygon points="918,604.6 921.7,603.4 925.4,608.3 932.7,610.7 935.1,616.2 926.6,617.4 921.7,613.2"/>
<polygon points="896.7,626 905.9,624.8 916.2,626 916.8,630.2 902.2,630.2 896.7,630.9"/>
<polygon points="958.3,625.4 964.4,626.6 969.3,629 966.8,632.7 960.7,630.2"/>
<polygon points="940.6,638.8 947.3,639.4 952.2,644.9 955.9,650.4 951,653.4 943.7,653.4 940,649.8"/>
<polygon points="927.2,657.7 932.7,660.1 937,663.2 933.9,668 930.9,671.1 927.2,664.4"/>
<polygon points="898.5,648.5 902.8,649.8 904.6,655.9 907.7,658.3 905.9,663.2 908.3,670.5 903.4,671.7 901,663.2 897.9,655.9"/>
<polygon points="1016,568.5 1026,568 1025.5,575.5 1017.2,576"/>
<polygon points="1014.8,587.5 1023.5,586.8 1022.2,594.2 1015.5,593.5"/>
</g>
<g fill="#ebf0e3"><polygon points="230.3,254.3 240.9,253.4 242.7,259.6 237.4,263.1 244.5,275.5 235.6,279 230.3,272 232.1,264.9 226.8,263.1"/><polygon points="248,300.2 258.6,294.9 265.7,302 263.9,310.9 256.8,314.4 258.6,323.2 251.5,319.7 246.2,310.9"/><polygon points="333.2,235.7 340.8,234.8 341.7,241.9 334.6,243.3"/><polygon points="247.5,303 262.5,294.2 266.2,305.5 260,313 257.5,323 252.5,315.5 246.2,310.5"/><polygon points="225,324.2 235,325.5 240,333 250,336.8 248.8,343 237.5,340.5 227.5,335.5"/></g>
<g fill="#fdfdfb"><polygon points="937.6,627.2 942.4,626.6 946.1,631.5 943.7,633.9 938.8,632.7"/><polygon points="460,632.5 465.5,631.8 467,638 461.2,639.2"/></g>
<g fill="#a9cfe3"><polygon points="974.2,544.2 976.8,544.2 977.9,552.7 980.5,560.6 984.7,571.8 982.1,572.3 977.3,562.2 974.7,552.7"/><polygon points="999.5,576.6 1002.2,577.2 1004.8,587.4 1005.3,598.2 1006.4,603.1 1003.2,602.6 1002.2,592.8 1000.6,584.7"/><polygon points="1010.1,502.4 1012.2,503.5 1013.8,512.5 1011.7,513"/><polygon points="981,520.4 983.7,520.4 986.8,514.6 985.3,513.5"/><polygon points="973.6,535.2 975.7,535.2 975.2,539.4 973.1,538.9"/></g>
<g fill="none" stroke-linejoin="round" stroke-linecap="round"><g stroke="#f1d3cb" stroke-opacity=".55" stroke-width="3.200"><polyline points="411.7,480.2 408.8,488.1"/><polyline points="443.5,463.1 437.8,467.2 434.7,476.8 437.3,482.2 437.8,487 445.2,489.1 453.7,493.9 463.7,493.4 462.1,498.2 462.1,505 464.8,508.2 462.1,511.4 465.3,514 466.9,519.9"/><polyline points="466.9,519.9 465.8,517.2 460,517 451.6,517.2 451.6,520.5 454.7,520.9 453.4,522.5 450.3,523.3 450.3,527.3 453.7,532 450.8,548.4"/><polyline points="450.8,548.4 446.8,546.3 450.3,540.5 435.2,538.9 433.6,535.7 425.2,527.3 423,526.7"/><polyline points="423,526.7 417.2,524.1 410.9,522.8 403.8,518.5"/><polyline points="423,526.7 420.9,534.1 415.1,539.9 407.2,544.2 406.1,550.5 403,552.7 397.2,548.9 395.8,544.2"/><polyline points="450.8,548.4 435.2,553.7 433.6,558 431,562.7 429.4,565.9 434.7,574 438.9,579.3 447.3,578.2 447.3,584.7 452.6,584.4"/><polyline points="452.6,584.4 457.4,592.8 455.8,598.7 454.7,608 452.6,609.7 455.8,613 453.2,620.1 448.4,624.9"/><polyline points="453.2,620.1 456.3,628.5 458.4,634.1 460,641.4 461.6,650 465.3,650"/><polyline points="452.6,584.4 461.1,583.1 474.8,577.7 475.4,584.1 476.9,589.5 487.5,595.5 493.8,598.2 500.7,599.8 502.3,613.5 511.8,613.5 512.9,619 516.6,622.9 515,628.5 513.1,634.9"/><polyline points="513.1,634.9 508.1,630.2 494.4,631.8 489.4,646.8"/><polyline points="489.4,646.8 480.6,650 479.6,646.6 475.9,646 470.1,644.3 465.3,650"/><polyline points="465.3,650 466.4,656.9 459.5,659.8 458.4,674.5 452.1,683.4 450.5,692.5 447.9,701.7 450.5,713 451.6,719.4 448.4,725.1 445.2,733.6 444.7,743.6 442.1,753.7 441,764.1 441,778.3 442.1,789.3 442.1,796.8 440,808.3"/><polyline points="489.4,646.8 498.1,655.7 509.7,661.5 516,664.5 510.8,676.2 524.5,676.2 531.9,666.2"/><polyline points="513.1,634.9 514.7,646 526.1,647.1 527.7,656.9 533.5,657.5 531.9,666.2"/><polyline points="531.9,666.2 536.1,669.7 536.6,675.4 525.6,682.8 516,693.7"/><polyline points="516,693.7 524.5,697.4 526.6,698 535.1,704.2 538.2,708.6 538.2,715.5"/><polyline points="516,693.7 513.9,701.7 512.9,711.1 511.8,717.4"/><polyline points="466.9,519.9 474.3,522.5 482.2,517.7 481.7,513 485.4,514.6 482.2,505.6 488.6,505 492.8,504.5 499.7,498.7"/><polyline points="499.7,498.7 496,495 497.5,490.7 501.8,489.1 504.4,482.2"/><polyline points="499.7,498.7 503.4,499.7 503.9,502.9 506,505.6 503.9,514 508.6,519.3 513.9,518.3 521.9,516.2"/><polyline points="521.9,516.2 517.6,508.8 513.9,505 518.7,499.7 518.4,494.7"/><polyline points="521.9,516.2 525,515.6 531.9,514"/><polyline points="531.9,514 534,509.3 532.7,502.4 535.1,496"/><polyline points="531.9,514 540.3,514.6 542.5,513 547.5,504.8"/><polyline points="307.1,384.1 296.8,381.5 294.6,375 290.4,370.2 286.7,363.5 278.8,361.1 275.1,366 268.2,362.3 257.7,349.1 248.7,349.1 248.7,351.7 233.5,351.7 213.8,344.4"/><polyline points="333.2,448.5 333.2,444.4 335.9,440.2 342.5,440.2 337.4,433.6 339.6,433.6 339.6,430.5 349.3,430.5 351.7,428.4 353.8,426.7"/><polyline points="349.3,430.5 349.1,441.1 350.7,441.1"/><polyline points="354.1,442.2 349.1,446.8 348.3,449.2 344.3,452.8"/><polyline points="348.3,449.2 352.8,451.6 356.7,454.5"/><polyline points="359.1,456.9 362.3,455.3 365.4,451.5 371.3,448.2 381,446"/><polyline points="367.6,467.3 371.8,467.7 378.1,468.1"/><polyline points="384.2,475.4 382.4,479 382.4,483.6"/><polyline points="441.3,420 441.5,424.5 440,426.1 441.3,429.2"/><polyline points="808.8,327.9 811.4,335 814.1,344.4 804.5,348.8 801.4,354.4 794,359.9 786.1,362.3 774.6,367.8 774.6,376.2"/><polyline points="774.6,374 750.8,374"/><polyline points="774.6,376.2 774.6,383.8 757,383.8 757,398.7 751.7,401.3 751.2,410.8 730.6,410.8"/><polyline points="774.6,376.2 794.9,389.7 826.5,412.1 826.7,414.4 837.3,419.4 837.8,423.9 842.9,423.1 851,421.1 883.6,398.3"/><polyline points="794.9,389.7 785.7,389.7 790.8,443.3 771.3,443.3 763.9,443.8 759.6,442.7 755.9,447.1"/><polyline points="755.9,447.1 749.1,440 743.8,437.2 734.3,437.8 733.2,440.2"/><polyline points="883.6,398.3 873.2,392.6 870.1,382.7 872.7,375 870.6,358.7 868.2,346.9 864.3,344.4 860,336.2 864,330.5 865.8,316.2"/><polyline points="870.6,358.7 874.8,349.4 881.2,343.8 881.4,340.2"/><polyline points="953.3,349.7 950.9,359.3 952.5,364.8 952.5,407 952.5,418.3 947.2,418.3 947.2,421.1"/><polyline points="947.2,421.1 904.9,398.7 899.7,401.3 895.4,403.6 883.6,398.3"/><polyline points="952.5,407 985.8,407 986.8,405.8 1015.4,407"/><polyline points="899.7,401.3 902.3,412.7 904.4,416.1 902.3,435.6 892.3,448.8 891.6,453.1"/><polyline points="842.9,423.1 842.9,437.8 838.9,443.8 827.3,444.4 821.5,446.2"/><polyline points="891.6,453.1 886.4,456.4 876.9,455.3 868,457.7 861.6,455.3 856.9,456.9 849.5,452 842.1,454.2 839.4,463.9"/><polyline points="839.4,463.9 835.5,460.4 833.1,461.2 832,458.5 821.5,446.2"/><polyline points="821.5,446.2 809.8,450.4 805.6,451.5 797.7,455.8 797.2,460.7 792.4,463.4 791.3,470.7"/><polyline points="755.9,447.1 757,453.1 760.2,460.2 763.9,462.3 771.3,460.2 776.5,467.7 778.1,472 787.6,469.9 791.3,470.7"/><polyline points="731.6,453.7 741.1,452.6 747.5,454.2 741.1,455.8 731.9,456.4"/><polyline points="732.2,460.4 741.1,458.5 748,458.7 754.9,460.7 760.2,460.2"/><polyline points="748,458.7 748,463.9 742.7,465 741.1,468"/><polyline points="750.1,478.2 754.4,473.6 761.2,473.1 764.4,477.9 766,481.1 770.7,487 775.5,485.9 779.7,481.7 778.1,472"/><polyline points="766,481.1 759.6,489.5"/><polyline points="775.5,485.9 776.5,492.3 781.3,495.5 780.5,503.2"/><polyline points="791.3,470.7 795.6,474.7 804.5,473.6 805.9,475.8 806.1,484.3 803.5,490.2 805.1,496.6 804,499.2"/><polyline points="805.9,475.8 805.3,467.7 819.6,467.2 823,473.1 822.5,479.5 823.8,487 826.7,493.9"/><polyline points="819.6,467.2 825.2,467.7 827.8,476.8 829.1,489.4 829,493.2"/><polyline points="825.2,467.7 833.1,461.2"/><polyline points="839.4,463.9 840.5,471.5 834.9,478.4 834.8,492.3"/><polyline points="865.3,501.3 869.5,493.4 875.9,489.7 882.2,490.2 884.9,482.2 890.1,475.2 893.3,467.7 897.5,465 895.4,460.2 894.9,456.5 891.6,453.1"/><polyline points="894.9,456.5 899.1,461.8 900.2,468.8 902.3,473.1 895.4,473.1 894.1,475.2 902.3,486.5"/><polyline points="947.2,421.1 947.2,442.2 941.4,443.3 939.3,450.9 936.6,459.1 941.4,468"/><polyline points="902.3,486.5 910.2,485.9 918.7,483.8 920.8,478.4 928.2,477.9 935.1,469.9 941.4,468"/><polyline points="902.3,486.5 896.5,494.4 897.5,499.7 900.7,506.6 905.5,514.6 890.7,514.6 880.4,514.6 872.2,513.8"/><polyline points="880.4,514.6 880.4,520.9 872.2,520.9"/><polyline points="890.7,514.6 890.1,519.3 894.4,518.8 897,522 893.8,526.2 897,529.4 896.5,536.2 889.1,538.9 886.4,536.8 881.7,539.4 883.3,545.2 879.3,547.1"/><polyline points="905.5,514.6 908.1,507.7 918.7,507.7 916,514 915,523.6 913.9,529.4 906,537.8 906,544.7 900.7,548.9 896.5,552.1 889.6,550.5 888,549.5 883.8,552.7"/><polyline points="884.9,556.9 887,552.7 889.6,550.5"/><polyline points="918.7,507.7 923.4,499.2 938.8,504.5 947.2,499.7 954.1,498.7 965.2,499.2"/><polyline points="941.4,468 945.1,478.4 949.9,482.7 953.6,486.5 959.9,491.8 965.2,499.2 970.5,503.5 976.3,502.4 983.4,507.7"/><polyline points="947.2,480.1 953,471.5 960.4,475.8 968.4,476.8 973.6,474.7 978.9,471.5 984.2,474.4 989.5,462.3 995.8,461.2 995.3,468.8 1000.6,475.8"/><polyline points="1000.6,475.8 994.8,483.8 1003.2,490.7 1006.9,497.6 1010.4,501.9"/><polyline points="1000.6,475.8 1001.6,469.9 1005.3,463.4 1011.2,458.5 1013.5,449.8 1015.9,434.5 1024.4,429.5"/><polyline points="1013.5,449.8 1020.7,446.6 1026.5,448.2 1032.8,449.3 1038.1,454.2 1044.4,459.6 1048.1,458.5"/><polyline points="1044.4,459.6 1041.3,467.7 1047.1,467.7 1048.9,465.2"/><polyline points="1047.1,467.7 1047.6,475.2 1058.2,480.1 1068.7,483.8 1074,483.8 1058.2,499.7 1050.3,500.3 1042.3,504 1041.8,505.3"/><polyline points="1041.8,505.3 1037,505.6 1029.1,508 1021.7,507.2 1015.4,502.9 1010.4,501.9 1002.2,501.9 1000.1,504"/><polyline points="1041.8,505.3 1037,510.9 1037,526.2 1040,534.9"/><polyline points="1000.1,504 1002.7,509.3 1005.3,517.2 1002.7,520.9 1000.1,525.1 999.5,531.5 1019.1,542.1 1019.6,544.7 1027.5,550.8"/><polyline points="1000.1,504 994.8,506.1 988.4,507.2 983.4,507.7 982.6,513.5 985.8,515.1 981.6,519.9 978.4,523.6 976.8,528.8 976.8,533.6"/><polyline points="981.6,531.5 999.5,531.5"/><polyline points="976.8,533.6 981.6,531.7 983.4,538.4 981.6,538.9 983.1,543.6 978.9,549.5 975.7,549.7"/><polyline points="976.8,533.6 973.6,540.5 974.7,542.1 981.6,538.9"/><polyline points="974.7,542.1 975.7,549.7 976.8,559.6 982.1,569.7"/><polyline points="982.1,569.7 987.4,572.9 994.2,576.1 999.5,577.7 1005.1,587.8"/><polyline points="1005.1,587.8 1013.3,588.5 1020.1,586.3 1026.5,585.8 1033.9,582"/><polyline points="994.2,576.1 996.4,583.6 994.8,587.9 996.4,592.8 993.2,598.7 995.8,600.9 1002.2,603.1 1003.2,608 1001.6,611.9 1006.9,617.9 1009.6,611.9 1010.1,604.2 1003.2,598.2 1005.1,587.8"/><polyline points="982.9,569.7 973.1,571.3 971,575.6 971.5,589 977.9,591.2 977.9,597.7 973.6,597.7 968.4,592.2 964.1,587.9 954.1,585.8 949.3,586.8 947.2,584.1"/><polyline points="947.2,584.1 947.2,595.5 936.6,595.5 936.6,613 944,620.7 948.3,620.1 953.9,621.8"/><polyline points="884.9,557.4 889.1,557.4 908.1,557.4 912.9,569.1 922.9,568.6 923.4,563.3 935.6,564.9 935.6,576.6 938.2,585.8 947.2,584.1"/><polyline points="882.5,618.8 889.1,617.4 895.4,619.6 917.6,619.6 933.5,622.4 944,620.7"/><polyline points="953.9,621.8 950.4,622.9 945.1,625.7 931.4,624.6 931.4,645.4 926.1,645.4 926.1,661.5 926.1,682.8 912.3,684.6 907.3,684.2"/><polyline points="926.1,661.5 929.8,673.3 936.6,672.7 941.9,664.5 955.1,666.8 962.5,658.6 963.1,654.6 969.9,648.8 975.7,646.6"/><polyline points="975.7,646.6 968.4,643.1 966.8,636.9 958.8,631.8 953.9,621.8 963.1,622.9 973.1,611.9 981,609.7"/><polyline points="981,609.7 985.8,611.9 994.2,615.7 994.8,622.9 993.2,636.9 991.6,641.4 985.8,647.7"/><polyline points="975.7,646.6 985.8,647.7 989.5,659.2 989,667.4 990,673.6 994.2,673.6"/><polyline points="981,609.7 980,605.3 995.8,600.9"/><polyline points="989,667.4 983.1,670.9 983.1,673.9 985.8,676.2 990,673.6"/><polyline points="963.1,690.1 968.4,684.6 975.2,687 975.7,691.9 969.4,696.2 965.2,694.3 963.1,690.1"/><polyline points="1001.4,352.5 1004.8,362.9"/><polyline points="1004.8,362.9 1005.3,362.3 1008,350.7 1008.2,345.1 1008.5,339.7 1005.9,340.7"/><polyline points="1008.5,339.7 1013.8,333.7 1010.6,330.8 1010.1,322.7"/><polyline points="1008.2,345.1 1014.9,345.7 1025.4,338.8 1027.5,346.3 1015.9,350.7 1021.2,356.8 1018.5,359.9 1010.6,364.8 1005.3,363.9"/><polyline points="1025.4,338.8 1037,332.4 1044.4,314.8 1057.1,314.5"/><polyline points="1011.4,323.4 1014.3,316.8 1021.2,316.8 1031.8,317.5 1044.4,314.8"/><polyline points="1027.5,346.3 1033.9,348.2 1042.9,353.1 1056.6,364.8 1066.1,365.4 1072.4,369 1076.1,369"/><polyline points="1066.1,365.4 1069.3,359.9 1074,359.9 1076.9,360.2"/><polyline points="1074,359.9 1072.4,353.8 1063.5,341.3 1060.3,335 1064.5,327.9 1060.3,322.1 1057.1,314.5 1053.4,299.3 1057.1,297.3"/><polyline points="1098.3,437.8 1095.2,423.9 1111,418.3 1114.7,407 1112.1,403 1098.3,401.8 1093.1,393.8"/><polyline points="1112.1,403 1116.3,394.9 1118.4,390.3 1116.8,383.5"/><polyline points="1095.2,423.9 1079.3,426.1 1065.6,433.9 1052.9,432.8 1048.7,432.8 1046.6,438.3"/><polyline points="1088.8,391.2 1090.9,392"/><polyline points="1040,284.6 1045,284.8 1050.3,287.6 1058.2,286.9 1066.6,282.6 1065.6,287.6 1059.2,286.9"/><polyline points="1050.3,287.6 1050.8,294.5 1057.1,297.3 1066.1,302.8 1074,298 1078.8,305.8"/><polyline points="1031.8,271.2 1045,272.6 1052.9,276.9 1061.4,277.7 1066.6,282.6 1073,286.9 1077.2,282.3"/><polyline points="1105.2,313.2 1110,312.8 1118.9,308.2 1123.2,308.8 1129,311.5 1133.7,312.2 1137.4,318.1"/><polyline points="1097.8,283 1105.7,279.1 1113.7,286.2 1116.3,286.2 1116.3,259.4 1130,255.6 1142.7,264.6"/><polyline points="1113.7,286.2 1121.6,286.2 1126.9,277.7 1137.4,286.9 1142.7,286.9"/><polyline points="1079.3,250.3 1076.7,247.2 1080.4,248.8 1077.2,237.9 1068.7,236.3 1066.1,232.4 1071.4,216.9 1078.3,220.2 1088.8,206 1096.8,206 1108.4,211.9 1114.7,215.3 1125.8,211.1 1130,211.9 1134.8,215.3 1137.4,213.6 1145.4,209.4 1137.4,203.4 1142.7,195.6 1142.7,186.8"/><polyline points="773.5,282.1 777.1,280.5 785.5,281.6 787.6,284.1 783.9,288.3 783.4,297.3 780.8,298 783.4,307.5 781.3,314.2"/><polyline points="811,271.4 816.7,274.8 824.1,275.5 828.3,278 837.2,278.2"/><polyline points="833.9,211.2 836.8,213.6 842.6,220.2 851,224.3 854.2,224.7 863.7,228.4 860.6,239.5 852.1,250.3 856.3,253.3 857.4,264.6 860,268.2"/><polyline points="860.6,239.5 865.8,238.3 871.1,240.3 875.4,244.9 875.9,249.5 868,251.8 864.8,248.8 857.4,252.6 856.3,253.3"/><polyline points="871.1,240.3 875.9,240.3 884.9,239.1 889.1,240.3 888,235.5 893.3,230.8 884.3,217.7 896,211.9 898.6,213.2 897.5,199.1 895.4,186.8"/><polyline points="854.2,224.7 852.6,219.4 852.1,213.6 851.6,204.3 857.4,201.7 858.4,193"/><polyline points="838.4,209 843.1,208.5 851.6,211.1"/><polyline points="866.1,177.7 870.1,178.6"/><polyline points="898.6,213.2 906.5,215.3 910.2,218.6 920,224.3 915.5,230 910.2,231.6 909.7,236.3 911,236.3 920,237.9 928.7,232.4 937.4,233.2 939.3,227.5 920,224.3"/><polyline points="893.3,230.8 898.1,231.6 899.7,228.4 909.7,231.6 909.7,236.3 905.5,245.3 892.8,248 885.9,246.1 884.9,243.4 875.4,244.9"/><polyline points="892.8,248 891.2,250.3 892.3,254.9 893.3,254.9"/><polyline points="905.5,245.3 908.1,248 913.9,252.6 919.7,252.6 927.7,250.3 932.4,248.8 937.4,233.2"/><polyline points="892.3,255.6 901.2,255.6 903.4,250.3 908.1,248"/><polyline points="919.7,252.6 920.8,260.1 922.9,260.1 924,266.8 921.9,270.4 918.2,276.9 917.9,278.4"/><polyline points="903.6,257.9 904.9,265.3 913.4,274.1 917.9,277.3"/><polyline points="922.9,260.1 933.5,260.1 939.3,261.6 940.3,265.3 938.8,275.5 938.8,279.1 931.4,280.5 929.3,281.9 926.6,276.9 924,272.6 921.9,270.4"/><polyline points="922.8,282.3 926.6,276.9"/><polyline points="929.3,281.9 928.7,286.2 931.4,289.3 926.1,297.3"/><polyline points="931.4,289.3 941.4,286.2 949.9,284.8 959.4,283.4 961,286.2 958,290"/><polyline points="938.8,279.1 941.9,286.2"/><polyline points="940.3,265.3 947.2,269 957.8,267.1 964.7,265.7 971.5,268.6"/><polyline points="959.4,283.4 965.2,280.5 968.4,281.2"/><polyline points="937.4,233.2 941.9,236.3 952,238.7 961,234 969.4,247.2 969.4,256 976.8,257.1"/><polyline points="961,234 967.3,233.2 974.7,237.1 979.4,248.8 969.4,256"/><polyline points="895.4,186.8 896.5,192.1 897.5,199.1"/><polyline points="924,181.8 940.9,182.7 944.6,185.9 946.7,197.4 943,200.8 947.2,213.6 939.8,224.3 939.3,227.5"/><polyline points="931.9,174 939.8,176.8 940.9,182.7"/><polyline points="944.6,185.9 955.1,184.1 961,170.2 969.4,166 966.8,153.9 965.2,152.5 969.4,133.8"/><polyline points="931.6,166.5 936.6,163.6 947.7,164.6 952.5,164.6 961,170.2"/><polyline points="948.8,149.5 955.7,149 965.2,152.5"/><polyline points="969.4,166 975.7,170.2 983.7,171.2 983.1,178.6 993.2,190.3 986.3,193 988.4,202.6 982.1,209.4 964.1,206 954.1,204.3 946.7,206.8"/><polyline points="988.4,202.6 1002.2,205.1 1008.5,216.9 1021.2,221 1032.3,223.5 1030.7,237.1 1022.8,239.5 1022.2,243.4"/><polyline points="882.2,138.9 884.3,127.5 887,116.8 884.9,110.2 885.4,94.2 890.1,81.2 897,66.3"/><polyline points="948,60 945.4,53.5"/><polyline points="967.8,121.6 973.6,114.6 979.4,105.7 986.8,95.4 978.9,86 978.9,61.3"/><polyline points="466.4,260.1 462.1,254.1 462.1,243.8 455.8,241 450.5,247.2 448.9,252.6 442.6,259.4 425.7,259.4 416.7,266 404.5,269.7 401.9,270.8 403,275.1 384.5,283.4 381.3,281.2 384.5,274.1 386.6,257.1 379.2,251.8 373.4,248 353.3,234 347,236.3 336.9,235.5 329,231.6 320,230.4 317.6,228.4 218,228.4"/></g><g stroke="#edc2ba" stroke-width="1.500"><polyline points="411.7,480.2 408.8,488.1"/><polyline points="443.5,463.1 437.8,467.2 434.7,476.8 437.3,482.2 437.8,487 445.2,489.1 453.7,493.9 463.7,493.4 462.1,498.2 462.1,505 464.8,508.2 462.1,511.4 465.3,514 466.9,519.9"/><polyline points="466.9,519.9 465.8,517.2 460,517 451.6,517.2 451.6,520.5 454.7,520.9 453.4,522.5 450.3,523.3 450.3,527.3 453.7,532 450.8,548.4"/><polyline points="450.8,548.4 446.8,546.3 450.3,540.5 435.2,538.9 433.6,535.7 425.2,527.3 423,526.7"/><polyline points="423,526.7 417.2,524.1 410.9,522.8 403.8,518.5"/><polyline points="423,526.7 420.9,534.1 415.1,539.9 407.2,544.2 406.1,550.5 403,552.7 397.2,548.9 395.8,544.2"/><polyline points="450.8,548.4 435.2,553.7 433.6,558 431,562.7 429.4,565.9 434.7,574 438.9,579.3 447.3,578.2 447.3,584.7 452.6,584.4"/><polyline points="452.6,584.4 457.4,592.8 455.8,598.7 454.7,608 452.6,609.7 455.8,613 453.2,620.1 448.4,624.9"/><polyline points="453.2,620.1 456.3,628.5 458.4,634.1 460,641.4 461.6,650 465.3,650"/><polyline points="452.6,584.4 461.1,583.1 474.8,577.7 475.4,584.1 476.9,589.5 487.5,595.5 493.8,598.2 500.7,599.8 502.3,613.5 511.8,613.5 512.9,619 516.6,622.9 515,628.5 513.1,634.9"/><polyline points="513.1,634.9 508.1,630.2 494.4,631.8 489.4,646.8"/><polyline points="489.4,646.8 480.6,650 479.6,646.6 475.9,646 470.1,644.3 465.3,650"/><polyline points="465.3,650 466.4,656.9 459.5,659.8 458.4,674.5 452.1,683.4 450.5,692.5 447.9,701.7 450.5,713 451.6,719.4 448.4,725.1 445.2,733.6 444.7,743.6 442.1,753.7 441,764.1 441,778.3 442.1,789.3 442.1,796.8 440,808.3"/><polyline points="489.4,646.8 498.1,655.7 509.7,661.5 516,664.5 510.8,676.2 524.5,676.2 531.9,666.2"/><polyline points="513.1,634.9 514.7,646 526.1,647.1 527.7,656.9 533.5,657.5 531.9,666.2"/><polyline points="531.9,666.2 536.1,669.7 536.6,675.4 525.6,682.8 516,693.7"/><polyline points="516,693.7 524.5,697.4 526.6,698 535.1,704.2 538.2,708.6 538.2,715.5"/><polyline points="516,693.7 513.9,701.7 512.9,711.1 511.8,717.4"/><polyline points="466.9,519.9 474.3,522.5 482.2,517.7 481.7,513 485.4,514.6 482.2,505.6 488.6,505 492.8,504.5 499.7,498.7"/><polyline points="499.7,498.7 496,495 497.5,490.7 501.8,489.1 504.4,482.2"/><polyline points="499.7,498.7 503.4,499.7 503.9,502.9 506,505.6 503.9,514 508.6,519.3 513.9,518.3 521.9,516.2"/><polyline points="521.9,516.2 517.6,508.8 513.9,505 518.7,499.7 518.4,494.7"/><polyline points="521.9,516.2 525,515.6 531.9,514"/><polyline points="531.9,514 534,509.3 532.7,502.4 535.1,496"/><polyline points="531.9,514 540.3,514.6 542.5,513 547.5,504.8"/><polyline points="307.1,384.1 296.8,381.5 294.6,375 290.4,370.2 286.7,363.5 278.8,361.1 275.1,366 268.2,362.3 257.7,349.1 248.7,349.1 248.7,351.7 233.5,351.7 213.8,344.4"/><polyline points="333.2,448.5 333.2,444.4 335.9,440.2 342.5,440.2 337.4,433.6 339.6,433.6 339.6,430.5 349.3,430.5 351.7,428.4 353.8,426.7"/><polyline points="349.3,430.5 349.1,441.1 350.7,441.1"/><polyline points="354.1,442.2 349.1,446.8 348.3,449.2 344.3,452.8"/><polyline points="348.3,449.2 352.8,451.6 356.7,454.5"/><polyline points="359.1,456.9 362.3,455.3 365.4,451.5 371.3,448.2 381,446"/><polyline points="367.6,467.3 371.8,467.7 378.1,468.1"/><polyline points="384.2,475.4 382.4,479 382.4,483.6"/><polyline points="441.3,420 441.5,424.5 440,426.1 441.3,429.2"/><polyline points="808.8,327.9 811.4,335 814.1,344.4 804.5,348.8 801.4,354.4 794,359.9 786.1,362.3 774.6,367.8 774.6,376.2"/><polyline points="774.6,374 750.8,374"/><polyline points="774.6,376.2 774.6,383.8 757,383.8 757,398.7 751.7,401.3 751.2,410.8 730.6,410.8"/><polyline points="774.6,376.2 794.9,389.7 826.5,412.1 826.7,414.4 837.3,419.4 837.8,423.9 842.9,423.1 851,421.1 883.6,398.3"/><polyline points="794.9,389.7 785.7,389.7 790.8,443.3 771.3,443.3 763.9,443.8 759.6,442.7 755.9,447.1"/><polyline points="755.9,447.1 749.1,440 743.8,437.2 734.3,437.8 733.2,440.2"/><polyline points="883.6,398.3 873.2,392.6 870.1,382.7 872.7,375 870.6,358.7 868.2,346.9 864.3,344.4 860,336.2 864,330.5 865.8,316.2"/><polyline points="870.6,358.7 874.8,349.4 881.2,343.8 881.4,340.2"/><polyline points="953.3,349.7 950.9,359.3 952.5,364.8 952.5,407 952.5,418.3 947.2,418.3 947.2,421.1"/><polyline points="947.2,421.1 904.9,398.7 899.7,401.3 895.4,403.6 883.6,398.3"/><polyline points="952.5,407 985.8,407 986.8,405.8 1015.4,407"/><polyline points="899.7,401.3 902.3,412.7 904.4,416.1 902.3,435.6 892.3,448.8 891.6,453.1"/><polyline points="842.9,423.1 842.9,437.8 838.9,443.8 827.3,444.4 821.5,446.2"/><polyline points="891.6,453.1 886.4,456.4 876.9,455.3 868,457.7 861.6,455.3 856.9,456.9 849.5,452 842.1,454.2 839.4,463.9"/><polyline points="839.4,463.9 835.5,460.4 833.1,461.2 832,458.5 821.5,446.2"/><polyline points="821.5,446.2 809.8,450.4 805.6,451.5 797.7,455.8 797.2,460.7 792.4,463.4 791.3,470.7"/><polyline points="755.9,447.1 757,453.1 760.2,460.2 763.9,462.3 771.3,460.2 776.5,467.7 778.1,472 787.6,469.9 791.3,470.7"/><polyline points="731.6,453.7 741.1,452.6 747.5,454.2 741.1,455.8 731.9,456.4"/><polyline points="732.2,460.4 741.1,458.5 748,458.7 754.9,460.7 760.2,460.2"/><polyline points="748,458.7 748,463.9 742.7,465 741.1,468"/><polyline points="750.1,478.2 754.4,473.6 761.2,473.1 764.4,477.9 766,481.1 770.7,487 775.5,485.9 779.7,481.7 778.1,472"/><polyline points="766,481.1 759.6,489.5"/><polyline points="775.5,485.9 776.5,492.3 781.3,495.5 780.5,503.2"/><polyline points="791.3,470.7 795.6,474.7 804.5,473.6 805.9,475.8 806.1,484.3 803.5,490.2 805.1,496.6 804,499.2"/><polyline points="805.9,475.8 805.3,467.7 819.6,467.2 823,473.1 822.5,479.5 823.8,487 826.7,493.9"/><polyline points="819.6,467.2 825.2,467.7 827.8,476.8 829.1,489.4 829,493.2"/><polyline points="825.2,467.7 833.1,461.2"/><polyline points="839.4,463.9 840.5,471.5 834.9,478.4 834.8,492.3"/><polyline points="865.3,501.3 869.5,493.4 875.9,489.7 882.2,490.2 884.9,482.2 890.1,475.2 893.3,467.7 897.5,465 895.4,460.2 894.9,456.5 891.6,453.1"/><polyline points="894.9,456.5 899.1,461.8 900.2,468.8 902.3,473.1 895.4,473.1 894.1,475.2 902.3,486.5"/><polyline points="947.2,421.1 947.2,442.2 941.4,443.3 939.3,450.9 936.6,459.1 941.4,468"/><polyline points="902.3,486.5 910.2,485.9 918.7,483.8 920.8,478.4 928.2,477.9 935.1,469.9 941.4,468"/><polyline points="902.3,486.5 896.5,494.4 897.5,499.7 900.7,506.6 905.5,514.6 890.7,514.6 880.4,514.6 872.2,513.8"/><polyline points="880.4,514.6 880.4,520.9 872.2,520.9"/><polyline points="890.7,514.6 890.1,519.3 894.4,518.8 897,522 893.8,526.2 897,529.4 896.5,536.2 889.1,538.9 886.4,536.8 881.7,539.4 883.3,545.2 879.3,547.1"/><polyline points="905.5,514.6 908.1,507.7 918.7,507.7 916,514 915,523.6 913.9,529.4 906,537.8 906,544.7 900.7,548.9 896.5,552.1 889.6,550.5 888,549.5 883.8,552.7"/><polyline points="884.9,556.9 887,552.7 889.6,550.5"/><polyline points="918.7,507.7 923.4,499.2 938.8,504.5 947.2,499.7 954.1,498.7 965.2,499.2"/><polyline points="941.4,468 945.1,478.4 949.9,482.7 953.6,486.5 959.9,491.8 965.2,499.2 970.5,503.5 976.3,502.4 983.4,507.7"/><polyline points="947.2,480.1 953,471.5 960.4,475.8 968.4,476.8 973.6,474.7 978.9,471.5 984.2,474.4 989.5,462.3 995.8,461.2 995.3,468.8 1000.6,475.8"/><polyline points="1000.6,475.8 994.8,483.8 1003.2,490.7 1006.9,497.6 1010.4,501.9"/><polyline points="1000.6,475.8 1001.6,469.9 1005.3,463.4 1011.2,458.5 1013.5,449.8 1015.9,434.5 1024.4,429.5"/><polyline points="1013.5,449.8 1020.7,446.6 1026.5,448.2 1032.8,449.3 1038.1,454.2 1044.4,459.6 1048.1,458.5"/><polyline points="1044.4,459.6 1041.3,467.7 1047.1,467.7 1048.9,465.2"/><polyline points="1047.1,467.7 1047.6,475.2 1058.2,480.1 1068.7,483.8 1074,483.8 1058.2,499.7 1050.3,500.3 1042.3,504 1041.8,505.3"/><polyline points="1041.8,505.3 1037,505.6 1029.1,508 1021.7,507.2 1015.4,502.9 1010.4,501.9 1002.2,501.9 1000.1,504"/><polyline points="1041.8,505.3 1037,510.9 1037,526.2 1040,534.9"/><polyline points="1000.1,504 1002.7,509.3 1005.3,517.2 1002.7,520.9 1000.1,525.1 999.5,531.5 1019.1,542.1 1019.6,544.7 1027.5,550.8"/><polyline points="1000.1,504 994.8,506.1 988.4,507.2 983.4,507.7 982.6,513.5 985.8,515.1 981.6,519.9 978.4,523.6 976.8,528.8 976.8,533.6"/><polyline points="981.6,531.5 999.5,531.5"/><polyline points="976.8,533.6 981.6,531.7 983.4,538.4 981.6,538.9 983.1,543.6 978.9,549.5 975.7,549.7"/><polyline points="976.8,533.6 973.6,540.5 974.7,542.1 981.6,538.9"/><polyline points="974.7,542.1 975.7,549.7 976.8,559.6 982.1,569.7"/><polyline points="982.1,569.7 987.4,572.9 994.2,576.1 999.5,577.7 1005.1,587.8"/><polyline points="1005.1,587.8 1013.3,588.5 1020.1,586.3 1026.5,585.8 1033.9,582"/><polyline points="994.2,576.1 996.4,583.6 994.8,587.9 996.4,592.8 993.2,598.7 995.8,600.9 1002.2,603.1 1003.2,608 1001.6,611.9 1006.9,617.9 1009.6,611.9 1010.1,604.2 1003.2,598.2 1005.1,587.8"/><polyline points="982.9,569.7 973.1,571.3 971,575.6 971.5,589 977.9,591.2 977.9,597.7 973.6,597.7 968.4,592.2 964.1,587.9 954.1,585.8 949.3,586.8 947.2,584.1"/><polyline points="947.2,584.1 947.2,595.5 936.6,595.5 936.6,613 944,620.7 948.3,620.1 953.9,621.8"/><polyline points="884.9,557.4 889.1,557.4 908.1,557.4 912.9,569.1 922.9,568.6 923.4,563.3 935.6,564.9 935.6,576.6 938.2,585.8 947.2,584.1"/><polyline points="882.5,618.8 889.1,617.4 895.4,619.6 917.6,619.6 933.5,622.4 944,620.7"/><polyline points="953.9,621.8 950.4,622.9 945.1,625.7 931.4,624.6 931.4,645.4 926.1,645.4 926.1,661.5 926.1,682.8 912.3,684.6 907.3,684.2"/><polyline points="926.1,661.5 929.8,673.3 936.6,672.7 941.9,664.5 955.1,666.8 962.5,658.6 963.1,654.6 969.9,648.8 975.7,646.6"/><polyline points="975.7,646.6 968.4,643.1 966.8,636.9 958.8,631.8 953.9,621.8 963.1,622.9 973.1,611.9 981,609.7"/><polyline points="981,609.7 985.8,611.9 994.2,615.7 994.8,622.9 993.2,636.9 991.6,641.4 985.8,647.7"/><polyline points="975.7,646.6 985.8,647.7 989.5,659.2 989,667.4 990,673.6 994.2,673.6"/><polyline points="981,609.7 980,605.3 995.8,600.9"/><polyline points="989,667.4 983.1,670.9 983.1,673.9 985.8,676.2 990,673.6"/><polyline points="963.1,690.1 968.4,684.6 975.2,687 975.7,691.9 969.4,696.2 965.2,694.3 963.1,690.1"/><polyline points="1001.4,352.5 1004.8,362.9"/><polyline points="1004.8,362.9 1005.3,362.3 1008,350.7 1008.2,345.1 1008.5,339.7 1005.9,340.7"/><polyline points="1008.5,339.7 1013.8,333.7 1010.6,330.8 1010.1,322.7"/><polyline points="1008.2,345.1 1014.9,345.7 1025.4,338.8 1027.5,346.3 1015.9,350.7 1021.2,356.8 1018.5,359.9 1010.6,364.8 1005.3,363.9"/><polyline points="1025.4,338.8 1037,332.4 1044.4,314.8 1057.1,314.5"/><polyline points="1011.4,323.4 1014.3,316.8 1021.2,316.8 1031.8,317.5 1044.4,314.8"/><polyline points="1027.5,346.3 1033.9,348.2 1042.9,353.1 1056.6,364.8 1066.1,365.4 1072.4,369 1076.1,369"/><polyline points="1066.1,365.4 1069.3,359.9 1074,359.9 1076.9,360.2"/><polyline points="1074,359.9 1072.4,353.8 1063.5,341.3 1060.3,335 1064.5,327.9 1060.3,322.1 1057.1,314.5 1053.4,299.3 1057.1,297.3"/><polyline points="1098.3,437.8 1095.2,423.9 1111,418.3 1114.7,407 1112.1,403 1098.3,401.8 1093.1,393.8"/><polyline points="1112.1,403 1116.3,394.9 1118.4,390.3 1116.8,383.5"/><polyline points="1095.2,423.9 1079.3,426.1 1065.6,433.9 1052.9,432.8 1048.7,432.8 1046.6,438.3"/><polyline points="1088.8,391.2 1090.9,392"/><polyline points="1040,284.6 1045,284.8 1050.3,287.6 1058.2,286.9 1066.6,282.6 1065.6,287.6 1059.2,286.9"/><polyline points="1050.3,287.6 1050.8,294.5 1057.1,297.3 1066.1,302.8 1074,298 1078.8,305.8"/><polyline points="1031.8,271.2 1045,272.6 1052.9,276.9 1061.4,277.7 1066.6,282.6 1073,286.9 1077.2,282.3"/><polyline points="1105.2,313.2 1110,312.8 1118.9,308.2 1123.2,308.8 1129,311.5 1133.7,312.2 1137.4,318.1"/><polyline points="1097.8,283 1105.7,279.1 1113.7,286.2 1116.3,286.2 1116.3,259.4 1130,255.6 1142.7,264.6"/><polyline points="1113.7,286.2 1121.6,286.2 1126.9,277.7 1137.4,286.9 1142.7,286.9"/><polyline points="1079.3,250.3 1076.7,247.2 1080.4,248.8 1077.2,237.9 1068.7,236.3 1066.1,232.4 1071.4,216.9 1078.3,220.2 1088.8,206 1096.8,206 1108.4,211.9 1114.7,215.3 1125.8,211.1 1130,211.9 1134.8,215.3 1137.4,213.6 1145.4,209.4 1137.4,203.4 1142.7,195.6 1142.7,186.8"/><polyline points="773.5,282.1 777.1,280.5 785.5,281.6 787.6,284.1 783.9,288.3 783.4,297.3 780.8,298 783.4,307.5 781.3,314.2"/><polyline points="811,271.4 816.7,274.8 824.1,275.5 828.3,278 837.2,278.2"/><polyline points="833.9,211.2 836.8,213.6 842.6,220.2 851,224.3 854.2,224.7 863.7,228.4 860.6,239.5 852.1,250.3 856.3,253.3 857.4,264.6 860,268.2"/><polyline points="860.6,239.5 865.8,238.3 871.1,240.3 875.4,244.9 875.9,249.5 868,251.8 864.8,248.8 857.4,252.6 856.3,253.3"/><polyline points="871.1,240.3 875.9,240.3 884.9,239.1 889.1,240.3 888,235.5 893.3,230.8 884.3,217.7 896,211.9 898.6,213.2 897.5,199.1 895.4,186.8"/><polyline points="854.2,224.7 852.6,219.4 852.1,213.6 851.6,204.3 857.4,201.7 858.4,193"/><polyline points="838.4,209 843.1,208.5 851.6,211.1"/><polyline points="866.1,177.7 870.1,178.6"/><polyline points="898.6,213.2 906.5,215.3 910.2,218.6 920,224.3 915.5,230 910.2,231.6 909.7,236.3 911,236.3 920,237.9 928.7,232.4 937.4,233.2 939.3,227.5 920,224.3"/><polyline points="893.3,230.8 898.1,231.6 899.7,228.4 909.7,231.6 909.7,236.3 905.5,245.3 892.8,248 885.9,246.1 884.9,243.4 875.4,244.9"/><polyline points="892.8,248 891.2,250.3 892.3,254.9 893.3,254.9"/><polyline points="905.5,245.3 908.1,248 913.9,252.6 919.7,252.6 927.7,250.3 932.4,248.8 937.4,233.2"/><polyline points="892.3,255.6 901.2,255.6 903.4,250.3 908.1,248"/><polyline points="919.7,252.6 920.8,260.1 922.9,260.1 924,266.8 921.9,270.4 918.2,276.9 917.9,278.4"/><polyline points="903.6,257.9 904.9,265.3 913.4,274.1 917.9,277.3"/><polyline points="922.9,260.1 933.5,260.1 939.3,261.6 940.3,265.3 938.8,275.5 938.8,279.1 931.4,280.5 929.3,281.9 926.6,276.9 924,272.6 921.9,270.4"/><polyline points="922.8,282.3 926.6,276.9"/><polyline points="929.3,281.9 928.7,286.2 931.4,289.3 926.1,297.3"/><polyline points="931.4,289.3 941.4,286.2 949.9,284.8 959.4,283.4 961,286.2 958,290"/><polyline points="938.8,279.1 941.9,286.2"/><polyline points="940.3,265.3 947.2,269 957.8,267.1 964.7,265.7 971.5,268.6"/><polyline points="959.4,283.4 965.2,280.5 968.4,281.2"/><polyline points="937.4,233.2 941.9,236.3 952,238.7 961,234 969.4,247.2 969.4,256 976.8,257.1"/><polyline points="961,234 967.3,233.2 974.7,237.1 979.4,248.8 969.4,256"/><polyline points="895.4,186.8 896.5,192.1 897.5,199.1"/><polyline points="924,181.8 940.9,182.7 944.6,185.9 946.7,197.4 943,200.8 947.2,213.6 939.8,224.3 939.3,227.5"/><polyline points="931.9,174 939.8,176.8 940.9,182.7"/><polyline points="944.6,185.9 955.1,184.1 961,170.2 969.4,166 966.8,153.9 965.2,152.5 969.4,133.8"/><polyline points="931.6,166.5 936.6,163.6 947.7,164.6 952.5,164.6 961,170.2"/><polyline points="948.8,149.5 955.7,149 965.2,152.5"/><polyline points="969.4,166 975.7,170.2 983.7,171.2 983.1,178.6 993.2,190.3 986.3,193 988.4,202.6 982.1,209.4 964.1,206 954.1,204.3 946.7,206.8"/><polyline points="988.4,202.6 1002.2,205.1 1008.5,216.9 1021.2,221 1032.3,223.5 1030.7,237.1 1022.8,239.5 1022.2,243.4"/><polyline points="882.2,138.9 884.3,127.5 887,116.8 884.9,110.2 885.4,94.2 890.1,81.2 897,66.3"/><polyline points="948,60 945.4,53.5"/><polyline points="967.8,121.6 973.6,114.6 979.4,105.7 986.8,95.4 978.9,86 978.9,61.3"/><polyline points="466.4,260.1 462.1,254.1 462.1,243.8 455.8,241 450.5,247.2 448.9,252.6 442.6,259.4 425.7,259.4 416.7,266 404.5,269.7 401.9,270.8 403,275.1 384.5,283.4 381.3,281.2 384.5,274.1 386.6,257.1 379.2,251.8 373.4,248 353.3,234 347,236.3 336.9,235.5 329,231.6 320,230.4 317.6,228.4 218,228.4"/></g></g>
<g font-family="Liberation Sans, DejaVu Sans, sans-serif" font-weight="bold"><g stroke="#f8f4ec" stroke-opacity=".6" stroke-width="1.500" paint-order="stroke" stroke-linejoin="round"><text x="192.5 214.5 236.5 258.6 280.2 303.3 326.7 348.3 365.9 385 406.6" y="207.8" font-size="18.6" fill="#5c5c5c" text-anchor="middle" >NORDAMERIKA</text><text x="423.9 445.3 468.1 490 513.7 536 557.2 574.8 594.3 616.2" y="578.4" font-size="18.6" fill="#5c5c5c" text-anchor="middle" >SÜDAMERIKA</text><text x="870.9 892.2 912.6 929.3 947.6 970" y="467.6" font-size="18.6" fill="#5c5c5c" text-anchor="middle" >AFRIKA</text></g><g font-style="italic" fill="#8db4ca"><text x="550.3 561.4 571.8 582.7 593.6 602.8 611.8 622.6 633.6 643.2 651.6 661.6" y="360.6" font-size="12.6" fill="#8db4ca" text-anchor="middle" >Nordatlantik</text><text x="688.5 699.8 711 722 731.3 740.3 751.2 762.2 771.8 780.2 790.2" y="681.6" font-size="12.6" fill="#8db4ca" text-anchor="middle" >Südatlantik</text></g><g font-size="9.400" fill="#474747" stroke="#fff" stroke-opacity=".75" stroke-width="1.600" paint-order="stroke" stroke-linejoin="round"><circle cx="401" cy="268.8" r="2.700" fill="#fff" stroke="#3c3c3c" stroke-width="1.200"/><text x="361.2" y="264" textLength="35.4" lengthAdjust="spacing" class="ct">Toronto</text><circle cx="429" cy="290.2" r="2.700" fill="#fff" stroke="#3c3c3c" stroke-width="1.200"/><text x="433.6" y="301.3" textLength="43" lengthAdjust="spacing" class="ct">New York</text><circle cx="296" cy="421" r="2.700" fill="#fff" stroke="#3c3c3c" stroke-width="1.200"/><text x="229.6" y="432.6" textLength="62.6" lengthAdjust="spacing" class="ct">Mexiko-Stadt</text><circle cx="429" cy="502" r="2.700" fill="#fff" stroke="#3c3c3c" stroke-width="1.200"/><text x="392.3" y="497.2" textLength="32" lengthAdjust="spacing" class="ct">Bogotá</text><circle cx="592" cy="651" r="2.700" fill="#fff" stroke="#3c3c3c" stroke-width="1.200"/><text x="596.6" y="662.6" textLength="66" lengthAdjust="spacing" class="ct">Rio de Janeiro</text><circle cx="820.3" cy="207.2" r="2.700" fill="#fff" stroke="#3c3c3c" stroke-width="1.200"/><text x="781.8" y="217.6" textLength="33.6" lengthAdjust="spacing" class="ct">London</text><circle cx="832.6" cy="228.6" r="2.700" fill="#fff" stroke="#3c3c3c" stroke-width="1.200"/><text x="806" y="239.8" textLength="22" lengthAdjust="spacing" class="ct">Paris</text><circle cx="886.3" cy="281.6" r="2.700" fill="#fff" stroke="#3c3c3c" stroke-width="1.200"/><text x="862.8" y="291.6" textLength="19.6" lengthAdjust="spacing" class="ct">Rom</text><circle cx="986" cy="357.6" r="2.700" fill="#fff" stroke="#3c3c3c" stroke-width="1.200"/><text x="957.6" y="369" textLength="24.6" lengthAdjust="spacing" class="ct">Kairo</text><circle cx="839" cy="491.8" r="2.700" fill="#fff" stroke="#3c3c3c" stroke-width="1.200"/><text x="807.3" y="502.3" textLength="26.4" lengthAdjust="spacing" class="ct">Lagos</text><circle cx="1015" cy="533" r="2.700" fill="#fff" stroke="#3c3c3c" stroke-width="1.200"/><text x="1019.8" y="528.5" textLength="34.6" lengthAdjust="spacing" class="ct">Nairobi</text></g></g>
<use href="#pin" x="960.4" y="53.8"/>
<use href="#pin" x="900.3" y="69"/>
<use href="#pin" x="783.3" y="78.8"/>
<use href="#pin" x="866.4" y="83.4"/>
<use href="#pin" x="953.5" y="113.5"/>
<use href="#pin" x="951.5" y="131.2"/>
<use href="#pin" x="872.5" y="139.6"/>
<use href="#pin" x="945" y="145.5"/>
<use href="#pin" x="809.4" y="155.4"/>
<use href="#pin" x="795.7" y="156.2"/>
<use href="#pin" x="850.4" y="169.6"/>
<use href="#pin" x="777.5" y="171.6"/>
<use href="#pin" x="922.5" y="174.6"/>
<use href="#pin" x="872.5" y="187.5"/>
<use href="#pin" x="851.4" y="194.5"/>
<use href="#pin" x="900.3" y="194.6"/>
<use href="#pin" x="804.8" y="195.8"/>
<use href="#pin" x="983.4" y="197.5"/>
<use href="#pin" x="808.6" y="198.5"/>
<use href="#pin" x="922.5" y="202.4"/>
<use href="#pin" x="898.4" y="211.6"/>
<use href="#pin" x="870.7" y="215.4"/>
<use href="#pin" x="922.5" y="216.6"/>
<use href="#pin" x="972.4" y="216.6"/>
<use href="#pin" x="522.5" y="218.5"/>
<use href="#pin" x="863.2" y="218.5"/>
<use href="#pin" x="833.4" y="219.6"/>
<use href="#pin" x="896.1" y="224.3"/>
<use href="#pin" x="951.5" y="225.5"/>
<use href="#pin" x="904.6" y="228.5"/>
<use href="#pin" x="913.3" y="237.5"/>
<use href="#pin" x="929.4" y="238.4"/>
<use href="#pin" x="885.5" y="239.3"/>
<use href="#pin" x="858.4" y="240.4"/>
<use href="#pin" x="1036.5" y="246.5"/>
<use href="#pin" x="921.2" y="247.2"/>
<use href="#pin" x="884.2" y="247.8"/>
<use href="#pin" x="954.5" y="248.5"/>
<use href="#pin" x="1067.4" y="248.5"/>
<use href="#pin" x="1048.4" y="253.6"/>
<use href="#pin" x="885.5" y="254.5"/>
<use href="#pin" x="934.8" y="256.4"/>
<use href="#pin" x="802.4" y="258.6"/>
<use href="#pin" x="925.2" y="259.2"/>
<use href="#pin" x="297.5" y="267.5"/>
<use href="#pin" x="775.5" y="269.3"/>
<use href="#pin" x="1130.6" y="272.8"/>
<use href="#pin" x="936.5" y="273.2"/>
<use href="#pin" x="1005.4" y="273.4"/>
<use href="#pin" x="791.6" y="293.4"/>
<use href="#pin" x="895.5" y="294.4"/>
<use href="#pin" x="997.4" y="299.4"/>
<use href="#pin" x="1023.4" y="300.4"/>
<use href="#pin" x="993.6" y="300.6"/>
<use href="#pin" x="869.4" y="305.5"/>
<use href="#pin" x="1009.3" y="306.4"/>
<use href="#pin" x="1045.4" y="312.5"/>
<use href="#pin" x="1102.5" y="314.7"/>
<use href="#pin" x="1005.1" y="318.9"/>
<use href="#pin" x="785.3" y="321.7"/>
<use href="#pin" x="1002.9" y="323.4"/>
<use href="#pin" x="1012.4" y="325.4"/>
<use href="#pin" x="912.5" y="351.3"/>
<use href="#pin" x="975.4" y="356.3"/>
<use href="#pin" x="750.5" y="362.5"/>
<use href="#pin" x="1105.6" y="367.6"/>
<use href="#pin" x="1058.4" y="368.5"/>
<use href="#pin" x="280.5" y="377.6"/>
<use href="#pin" x="440.3" y="380.5"/>
<use href="#pin" x="1117.5" y="390.4"/>
<use href="#pin" x="760.5" y="395.4"/>
<use href="#pin" x="448.3" y="396.6"/>
<use href="#pin" x="468.3" y="400.6"/>
<use href="#pin" x="411.3" y="401.6"/>
<use href="#pin" x="486.7" y="405.3"/>
<use href="#pin" x="812.5" y="406.7"/>
<use href="#pin" x="870.5" y="407.4"/>
<use href="#pin" x="490.2" y="408.2"/>
<use href="#pin" x="1071.3" y="414.6"/>
<use href="#pin" x="340.4" y="415.5"/>
<use href="#pin" x="1026.5" y="416.4"/>
<use href="#pin" x="495.4" y="416.6"/>
<use href="#pin" x="919.4" y="417.4"/>
<use href="#pin" x="977.3" y="419.5"/>
<use href="#pin" x="742.8" y="421.2"/>
<use href="#pin" x="496.7" y="424.8"/>
<use href="#pin" x="349.4" y="425.4"/>
<use href="#pin" x="736.8" y="426.6"/>
<use href="#pin" x="493.2" y="432.7"/>
<use href="#pin" x="454.4" y="433.6"/>
<use href="#pin" x="370.3" y="434.6"/>
<use href="#pin" x="740.5" y="435.4"/>
<use href="#pin" x="1045.4" y="436.3"/>
<use href="#pin" x="495.4" y="442.4"/>
<use href="#pin" x="761.5" y="443.2"/>
<use href="#pin" x="376.3" y="446.4"/>
<use href="#pin" x="1062.3" y="446.5"/>
<use href="#pin" x="862.4" y="447.4"/>
<use href="#pin" x="394.4" y="452.6"/>
<use href="#pin" x="824.3" y="453.4"/>
<use href="#pin" x="756.5" y="453.6"/>
<use href="#pin" x="975.4" y="455.4"/>
<use href="#pin" x="1029.3" y="457.2"/>
<use href="#pin" x="790.3" y="458.4"/>
<use href="#pin" x="813.4" y="459.6"/>
<use href="#pin" x="469.3" y="461.4"/>
<use href="#pin" x="928.5" y="461.4"/>
<use href="#pin" x="768.5" y="465.3"/>
<use href="#pin" x="1068.2" y="469.3"/>
<use href="#pin" x="508" y="474.5"/>
<use href="#pin" x="523.3" y="476.5"/>
<use href="#pin" x="539.2" y="477.4"/>
<use href="#pin" x="873.5" y="489.8"/>
<use href="#pin" x="991.3" y="490.5"/>
<use href="#pin" x="854.4" y="497.8"/>
<use href="#pin" x="881.5" y="505.5"/>
<use href="#pin" x="405.2" y="505.9"/>
<use href="#pin" x="978.5" y="509.7"/>
<use href="#pin" x="1112.3" y="523.5"/>
<use href="#pin" x="1004.3" y="532.5"/>
<use href="#pin" x="420.4" y="550.5"/>
<use href="#pin" x="999.3" y="569.7"/>
<use href="#pin" x="968.5" y="575.5"/>
<use href="#pin" x="1006.5" y="596.8"/>
<use href="#pin" x="975.5" y="602.6"/>
<use href="#pin" x="1065.5" y="605.5"/>
<use href="#pin" x="1124.5" y="608.5"/>
<use href="#pin" x="910.5" y="617.4"/>
<use href="#pin" x="511.2" y="626.2"/>
<use href="#pin" x="986.5" y="644.7"/>
<use href="#pin" x="948.5" y="659.5"/>
<use href="#pin" x="968.5" y="663.6"/>
<use href="#pin" x="523.6" y="684.7"/>
<use href="#pin" x="443.4" y="693.6"/>
<g font-family="Liberation Sans, DejaVu Sans, sans-serif" font-size="12.500" fill="#333" text-anchor="middle" stroke="#333" stroke-width=".3"><text x="242" y="95.200">0</text><text x="299.400" y="95.200" textLength="32.400" lengthAdjust="spacing">1.000</text><text x="357.300" y="95.200" textLength="33.600" lengthAdjust="spacing">2.000</text><text x="426.200" y="95.200" textLength="54.800" lengthAdjust="spacing">3.000 km</text></g><clipPath id="sbc"><rect x="243" y="104" width="172" height="8" rx="3.200"/></clipPath><g clip-path="url(#sbc)"><rect x="243" y="104" width="57" height="8" fill="#000" fill-opacity=".56"/><rect x="300" y="104" width="58" height="8" fill="#fff" fill-opacity=".62"/><rect x="300" y="104" width="58" height="8" fill="none" stroke="#000" stroke-opacity=".35" stroke-width="1"/><rect x="358" y="104" width="57" height="8" fill="#000" fill-opacity=".56"/></g><text x="231.200" y="793" font-family="Liberation Sans, DejaVu Sans, sans-serif" font-size="9.300" font-weight="bold" fill="#5f7f8f" text-decoration="underline" textLength="101" lengthAdjust="spacing">Rechtl. Informationen</text><defs><filter id="calloutShadow" x="-20%" y="-50%" width="140%" height="220%"><feGaussianBlur stdDeviation="5"/></filter></defs><rect x="561" y="457" width="149" height="50" rx="8" fill="#0f4a6a" fill-opacity=".38" filter="url(#calloutShadow)"/><path d="M567 453.200h137a5 5 0 0 1 5 5v36.800a5 5 0 0 1-5 5h-137a5 5 0 0 1-5-5v-9.600l-11.600-8.400 11.600-8.400v-10.400a5 5 0 0 1 5-5z" fill="#5a7a88"/><text x="574.500" y="472.900" font-family="Liberation Sans, DejaVu Sans, sans-serif" font-size="12.800" font-weight="bold" fill="#fff" textLength="121.800" lengthAdjust="spacing">Französisch-Guayana</text><text x="574.500" y="488.800" font-family="Liberation Sans, DejaVu Sans, sans-serif" font-size="11.600" fill="#d3e3ea" textLength="44" lengthAdjust="spacing">Cayenne</text><circle cx="1090.800" cy="731.300" r="26.300" fill="#5b8aa3" fill-opacity=".25"/><circle cx="1090.800" cy="730.900" r="25.800" fill="#fff"/><circle cx="1090.800" cy="730.900" r="15.200" fill="#fff" stroke="#9dc6da" stroke-width="1.700"/><path d="M1090.800 707.300l3.200 5.400h-6.400z" fill="#f4373a"/><path d="M1068.200 730.900h3.800M1109.900 730.900h3.800M1090.800 750.400v3.500" stroke="#c6c6c6" stroke-width="1.500"/><text x="1090.800" y="735.700" text-anchor="middle" font-family="Liberation Sans, DejaVu Sans, sans-serif" font-size="13.400" fill="#c2c2c2">3D</text><rect x="1062.600" y="764" width="27.600" height="19.800" rx="3.200" fill="#4d7f9a" fill-opacity=".3"/><rect x="1090.700" y="764" width="27.600" height="19.800" rx="3.200" fill="#4d7f9a" fill-opacity=".3"/><rect x="1062.900" y="763.800" width="27" height="19.200" rx="3" fill="#fff"/><rect x="1091" y="763.800" width="27" height="19.200" rx="3" fill="#fff"/><path d="M1070.900 773.500h11.200M1099 773.500h11M1104.500 768v11" stroke="#1e1e1e" stroke-width="1.300"/>
</svg></div>
<div id="st"><div id="seg"><i style="left:0;width:76px;background:linear-gradient(#727274,#676769)"></i><i style="left:76px;width:1px;background:#5c5c5e"></i><i style="left:152px;width:1px;background:#5c5c5e"></i><span style="left:0;width:76px;color:#fff">Standard</span><span style="left:76px;width:76px">Satellit</span><span style="left:152px;width:76px">Hybrid</span></div><svg style="position:absolute;left:1026.5px;top:2.500px" width="15" height="15"><use href="#bdg"/></svg><div class="sn" style="left:1046.2px">190</div><div style="position:absolute;left:1081.2px;top:2.300px;width:15.400px;height:15.400px"><svg viewBox="0 0 32 32" width="15.4" height="15.4"><defs><radialGradient id="gt" cx="36%" cy="62%" r="78%"><stop offset="0" stop-color="#45a2ea"/><stop offset=".5" stop-color="#1f73d0"/><stop offset=".85" stop-color="#113f95"/><stop offset="1" stop-color="#0a2258"/></radialGradient><radialGradient id="nt" cx="25%" cy="75%" r="95%"><stop offset=".55" stop-color="#000" stop-opacity="0"/><stop offset="1" stop-color="#000" stop-opacity=".6"/></radialGradient><clipPath id="ct"><circle cx="16" cy="16" r="15.600"/></clipPath></defs><circle cx="16" cy="16" r="15.600" fill="url(#gt)"/><g clip-path="url(#ct)"><path d="M11.500 3.200l5.500-1.400 4 1.200-1.500 1.800-4.500.4z" fill="#4d7a2c"/><path d="M21.500 6.500l4.500-1.500 4 3.500 1.500 5-4 1-3-2.500-1.500-2.500z" fill="#7d8f33"/><path d="M7.500 9l2.500-3 4-1.500 4 .5 2.500 1.500 1 2 1 3 1.500 2.500-2.500 1-1.500 3-1 3-1.500 2-2 2.500-1.500-.5-1.500-3-.5-4-1-2.500-2.500-.5-2.500-.5-1.500-2z" fill="#eeb63a"/><path d="M13 15.500l3-1 4 .5 1.500 2.500-1 3-1.500 2-2 0-1.500-3z" fill="#8cad3a"/><path d="M9 7.500l4-2 4 .3 2.500 1.500-1 2.500-4 1-4-.8z" fill="#f5cd4c"/><path d="M14.500 20l3-.5 1 2-1.500 2.500-1.500-.5z" fill="#eaa231"/><path d="M21.800 19.500l.9.300-.3 3-.9.500z" fill="#d99a32"/><g fill="#e0281e"><circle cx="13.400" cy="8.500" r=".7"/><circle cx="17.600" cy="11.200" r=".7"/><circle cx="11.300" cy="19.200" r=".7"/><circle cx="17.400" cy="22.400" r=".6"/><circle cx="3.300" cy="11.500" r=".6"/><circle cx="23.800" cy="7" r=".6"/><circle cx="26.400" cy="10.500" r=".6"/><circle cx="18.400" cy="17.200" r=".6"/></g><circle cx="16" cy="16" r="15.600" fill="url(#nt)"/></g><circle cx="16" cy="16" r="15.400" fill="none" stroke="#1a1a2a" stroke-opacity=".55" stroke-width=".7"/></svg></div><div class="sn" style="left:1108.6px">54</div></div>
</div></body></html>
